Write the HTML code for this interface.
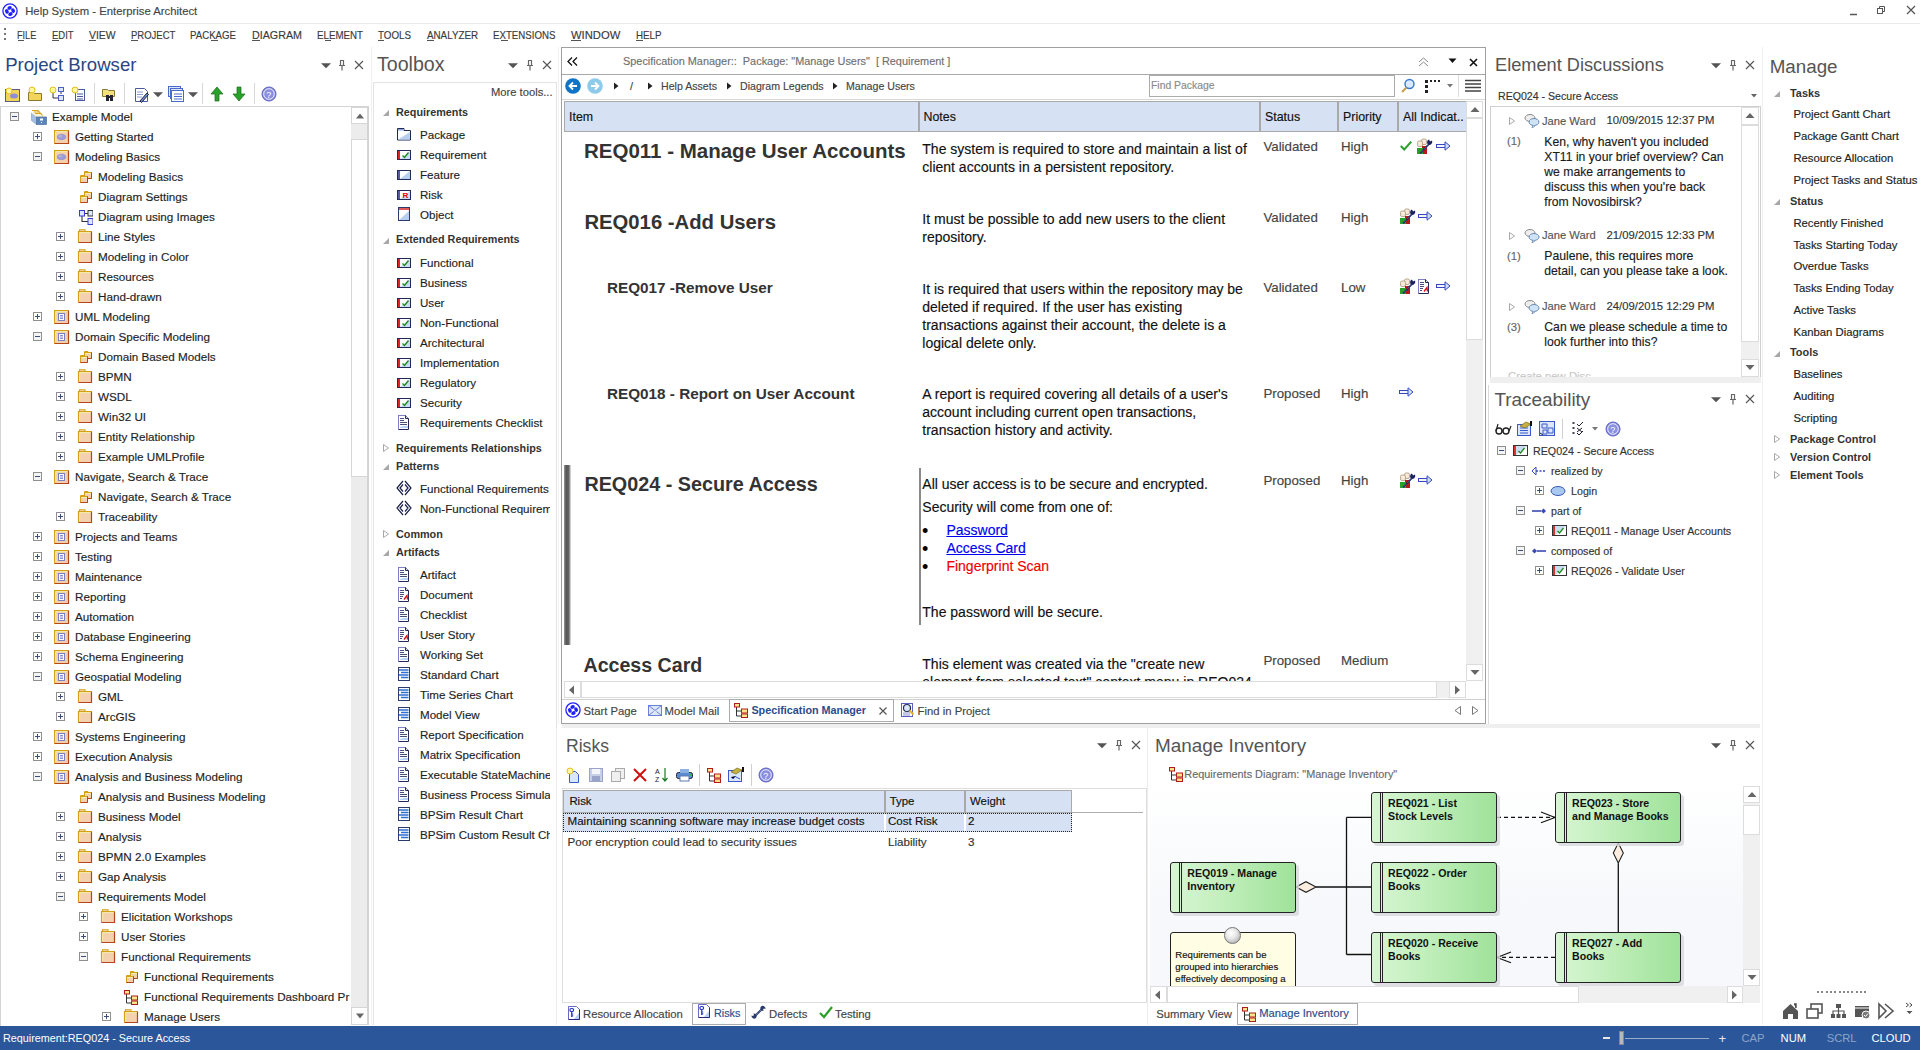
<!DOCTYPE html>
<html><head><meta charset="utf-8"><title>Help System - Enterprise Architect</title>
<style>
html,body{margin:0;padding:0;}
body{width:1920px;height:1050px;overflow:hidden;position:relative;background:#fff;font-family:"Liberation Sans", sans-serif;}
.t{position:absolute;white-space:pre;line-height:1;}
.r{position:absolute;box-sizing:border-box;}
.ic{position:absolute;overflow:visible;}
.clip{position:absolute;overflow:hidden;}
</style></head><body>
<svg width="0" height="0" style="position:absolute">
<defs>
<linearGradient id="gGreen" x1="0" x2="1" y1="0" y2="0"><stop offset="0" stop-color="#d4f4d0"/><stop offset="1" stop-color="#9de29a"/></linearGradient>
<linearGradient id="gBar" x1="0" x2="1"><stop offset="0" stop-color="#7a7a7a"/><stop offset="0.5" stop-color="#5a5a5a"/><stop offset="1" stop-color="#e8e8e8"/></linearGradient>
<radialGradient id="gBall" cx="0.4" cy="0.35" r="0.7"><stop offset="0" stop-color="#ffffff"/><stop offset="1" stop-color="#a8a8a8"/></radialGradient>
<symbol id="plus" viewBox="0 0 9 9"><rect x="0.5" y="0.5" width="8" height="8" fill="#fff" stroke="#8f8f8f"/><path d="M2 4.5h5M4.5 2v5" stroke="#3b4e7a" stroke-width="1"/></symbol>
<symbol id="minus" viewBox="0 0 9 9"><rect x="0.5" y="0.5" width="8" height="8" fill="#f4f4f4" stroke="#8f8f8f"/><path d="M2 4.5h5" stroke="#3b4e7a" stroke-width="1"/></symbol>
<symbol id="folder" viewBox="0 0 16 16"><path d="M2.5 2.2V0.8h5.5v1.4" fill="#f3e0c0" stroke="#d4a017" stroke-width="1.1"/><rect x="1.5" y="2.5" width="13" height="11" fill="#f3d0ae"/><path d="M1.5 13.5V2.5h13" fill="none" stroke="#d4a017" stroke-width="1.2"/><path d="M14.5 2.5v11h-13" fill="none" stroke="#b5451b" stroke-width="1.2"/><path d="M2.7 12.3V3.7h11" fill="none" stroke="#f5f0a8" stroke-width="0.9"/></symbol>
<symbol id="pkgview" viewBox="0 0 16 16"><rect x="0.5" y="1.5" width="14" height="13" fill="#f3d0ae"/><path d="M0.5 14.5V1.5h14" fill="none" stroke="#d4a017" stroke-width="1.2"/><path d="M14.5 1.5v13h-14" fill="none" stroke="#b5451b" stroke-width="1.2"/><path d="M1.7 13.3V2.7h11.6" fill="none" stroke="#f5f0a8" stroke-width="0.9"/><ellipse cx="7.5" cy="8" rx="4.2" ry="2.7" fill="#9c9cdc" stroke="#8080c0" stroke-width="0.5"/><ellipse cx="6.3" cy="7.2" rx="1.8" ry="1.1" fill="#b8b8c8"/></symbol>
<symbol id="pkglist" viewBox="0 0 16 16"><rect x="0.5" y="1.5" width="14" height="13" fill="#f3d0ae"/><path d="M0.5 14.5V1.5h14" fill="none" stroke="#d4a017" stroke-width="1.2"/><path d="M14.5 1.5v13h-14" fill="none" stroke="#b5451b" stroke-width="1.2"/><path d="M1.7 13.3V2.7h11.6" fill="none" stroke="#f5f0a8" stroke-width="0.9"/><rect x="4.5" y="4.5" width="6" height="7" fill="#fff" stroke="#6a78c0" stroke-width="0.9"/><path d="M6 6.5h3M6 8h3M6 9.5h3" stroke="#6a78c0" stroke-width="0.8"/></symbol>
<symbol id="diagram" viewBox="0 0 16 16"><path d="M7.5 3.5V2.5h3.5v1" fill="#f5f0c0" stroke="#d4a017"/><rect x="7.5" y="3.5" width="7" height="6" fill="#f3d0ae" stroke="#d4a017"/><path d="M14.5 3.5v6h-7" fill="none" stroke="#b5451b"/><path d="M8.5 4.5h5.5" stroke="#f5f0a8"/><path d="M3.5 7.5V6.5h3.5v1" fill="#f5f0c0" stroke="#d4a017"/><rect x="3.5" y="7.5" width="7" height="6" fill="#f3d0ae" stroke="#d4a017"/><path d="M10.5 7.5v6h-7" fill="none" stroke="#b5451b"/><path d="M4.5 8.5h5.5" stroke="#f5f0a8"/></symbol>
<symbol id="diagimg" viewBox="0 0 16 16"><path d="M7 4.5h4M5 7v5.5h6" stroke="#333" stroke-width="1.1" fill="none"/><rect x="2.5" y="1.5" width="5" height="5.5" fill="#dbe8fb" stroke="#3a3ad0"/><rect x="11" y="1.5" width="5" height="5.5" fill="#dbe8fb" stroke="#333"/><rect x="11" y="9.5" width="5" height="6" fill="#dbe8fb" stroke="#3a3ad0"/></symbol>
<symbol id="diagred" viewBox="0 0 16 16"><path d="M3.5 5v9h5M3.5 9h5" stroke="#333" fill="none"/><rect x="1.5" y="1.5" width="5" height="3.5" fill="#fde48a" stroke="#b01c1c"/><rect x="8.5" y="7" width="6" height="4" fill="#fde48a" stroke="#b01c1c"/><rect x="8.5" y="12" width="6" height="3.5" fill="#fde48a" stroke="#b01c1c"/></symbol>
<symbol id="model" viewBox="0 0 16 16"><path d="M0.5 4l5 4v7.5l-5-4z" fill="#a8c0e0" stroke="#7a98c4" stroke-width="0.6"/><path d="M0.5 4h9l6 4h-10z" fill="#fbf3d8"/><path d="M1 1.5h6l1.5 2M2.5 3h6l1.5 2M4 4.5h6l1.5 2" stroke="#d9a520" stroke-width="1.1" fill="none"/><rect x="5.5" y="8" width="10" height="7.5" fill="#5c85bb" stroke="#4a6fa2" stroke-width="0.7"/><rect x="9" y="9.5" width="3" height="2" fill="#fff"/><circle cx="10.5" cy="13.5" r="0.6" fill="#fff"/></symbol>
<symbol id="tbpkg" viewBox="0 0 16 16"><path d="M1.5 2.5h6.5v2h6.5v9.5h-13z" fill="#fff" stroke="#23285a"/><path d="M2 13.5L14 6v7.5z" fill="#b9cff0"/><rect x="2" y="3" width="5.5" height="1.5" fill="#8aa2d8"/></symbol>
<symbol id="tbreq" viewBox="0 0 16 16"><rect x="1.5" y="4.5" width="13" height="9" fill="#fff" stroke="#23285a"/><path d="M4 13V5h10z" fill="#fff"/><path d="M4 13L14 5v8z" fill="#cbdcf5"/><rect x="2" y="5" width="2" height="8" fill="#d22"/><path d="M6.5 9.5l2 2 4-5" stroke="#1a8a1a" stroke-width="1.3" fill="none"/></symbol>
<symbol id="tbfeat" viewBox="0 0 16 16"><rect x="1.5" y="4.5" width="13" height="9" fill="#fff" stroke="#23285a"/><path d="M4 13L14 5v8z" fill="#b9cff0"/><rect x="2" y="5" width="2" height="8" fill="#5a5aa0"/></symbol>
<symbol id="tbrisk" viewBox="0 0 16 16"><rect x="1.5" y="4.5" width="13" height="9" fill="#fff" stroke="#23285a"/><path d="M4 13L14 5v8z" fill="#cbdcf5"/><rect x="2" y="5" width="2" height="8" fill="#5a5aa0"/><text x="6.5" y="12.3" font-size="8" font-weight="bold" fill="#e00" font-family="Liberation Sans">R</text></symbol>
<symbol id="tbobj" viewBox="0 0 16 16"><rect x="2.5" y="1.5" width="11" height="13" fill="#fff" stroke="#2c3a6e"/><rect x="3" y="2" width="10" height="2" fill="#e05a5a"/><path d="M3 14L13 5v9z" fill="#b9cff0"/></symbol>
<symbol id="tbpat" viewBox="0 0 16 16"><path d="M7 1L1 8l6 7M7 4.5L4 8l3 3.5M9 1l6 7-6 7M9 4.5L12 8l-3 3.5" fill="none" stroke="#1a1f4a" stroke-width="1.2"/></symbol>
<symbol id="tbdoc" viewBox="0 0 16 16"><path d="M2.5 1.5h7l3 3v11h-10z" fill="#fff" stroke="#23285a"/><path d="M2.5 15.5v-14h7" fill="none" stroke="#8080c8"/><path d="M4 4.5h4M4 6.5h4M4 8.5h7M4 10.5h7" stroke="#4a4e7a"/><path d="M4 13l4-1h4v2H4z" fill="#b8d4f4"/><path d="M9.5 1.5v3h3" fill="#dde6f7" stroke="#23285a"/></symbol>
<symbol id="tbdocred" viewBox="0 0 16 16"><path d="M2.5 1.5h7l3 3v11h-10z" fill="#fff" stroke="#23285a"/><path d="M2.5 15.5v-14h7" fill="none" stroke="#8080c8"/><path d="M4 4.5h4M4 6.5h4M4 8.5h4M4 10.5h3M4 12.5h2" stroke="#4a4e7a"/><path d="M8 13.5l3-4 0.5 4" stroke="#e01010" stroke-width="1.3" fill="none"/><path d="M9.5 1.5v3h3" fill="#dde6f7" stroke="#23285a"/></symbol>
<symbol id="tbchart" viewBox="0 0 16 16"><rect x="2.5" y="1.5" width="11" height="13" fill="#fff" stroke="#2c3a6e"/><path d="M3 4h9.5M5 6.5h7.5M3 9h9.5M5 11.5h7.5" stroke="#2f6fd0" stroke-width="1.3"/></symbol>
<symbol id="pdown" viewBox="0 0 10 10"><path d="M0 3.2h10L5 8.2z" fill="#555"/></symbol>
<symbol id="pin" viewBox="0 0 10 12"><path d="M3 1.5h4M3.5 1.5v5M6.5 1.5v5M2 6.5h6M5 6.5v5" stroke="#666" fill="none" stroke-width="1.2"/></symbol>
<symbol id="xcl" viewBox="0 0 10 10"><path d="M1 1l8 8M9 1l-8 8" stroke="#555" stroke-width="1.1"/></symbol>
<symbol id="tri" viewBox="0 0 8 8"><path d="M7 1v6H1z" fill="#a8a8a8"/></symbol>
<symbol id="trir" viewBox="0 0 8 10"><path d="M1.5 1.5l5 3.5-5 3.5z" fill="none" stroke="#a8a8a8"/></symbol>
<symbol id="arrowr" viewBox="0 0 16 10"><rect x="1.5" y="3.5" width="9" height="3" fill="#f4f6ff" stroke="#3848c0"/><path d="M10 0.8L15 5l-5 4.2z" fill="#cfe0f8" stroke="#3848c0"/></symbol>
<symbol id="check" viewBox="0 0 16 16"><path d="M2 8l4 4 8-9" stroke="#2aa02a" stroke-width="2.2" fill="none"/></symbol>
<symbol id="people" viewBox="0 0 18 16"><rect x="6.5" y="1" width="5" height="5.5" rx="1.5" fill="#f8eadb" stroke="#a08c6a" stroke-width="0.7"/><rect x="2.5" y="3" width="5" height="5.5" rx="1.5" fill="#f8eadb" stroke="#a08c6a" stroke-width="0.7"/><rect x="7" y="8" width="5" height="8" fill="#b81818"/><rect x="2" y="10" width="6" height="6" fill="#28a028"/><path d="M5 15.5L15 5" stroke="#1a2060" stroke-width="1.8"/><path d="M5 15.5L15 5" stroke="#a8c8f0" stroke-width="0.6" stroke-dasharray="1 1"/><path d="M13 6.5a3 3 0 0 1 1-5l1 2 2-1a3 3 0 0 1-4 4z" fill="#1a2060"/></symbol>
<symbol id="help" viewBox="0 0 16 16"><circle cx="8" cy="8" r="7" fill="#8a8fe0" stroke="#5a5fc0"/><circle cx="8" cy="8" r="5.3" fill="none" stroke="#fff" stroke-width="0.8"/><text x="5.2" y="11.5" font-size="9" fill="#fff" font-family="Liberation Sans">?</text></symbol>
<symbol id="bubble" viewBox="0 0 16 16"><ellipse cx="6" cy="6" rx="5" ry="3.5" fill="#eee" stroke="#8a8a8a"/><ellipse cx="10" cy="10" rx="5" ry="3.5" fill="#cfe3f7" stroke="#6a8ab0"/><path d="M9 13l-1 3 3-2" fill="#cfe3f7" stroke="#6a8ab0" stroke-width="0.8"/></symbol>
<symbol id="eaLogo" viewBox="0 0 16 16"><circle cx="8" cy="8" r="7.1" fill="#fff" stroke="#2020ff" stroke-width="1.3"/><g fill="#2020ff"><ellipse cx="7.6" cy="4.9" rx="2.3" ry="1.8" transform="rotate(-25 7.6 4.9)"/><ellipse cx="11.1" cy="7.6" rx="2.3" ry="1.8" transform="rotate(65 11.1 7.6)"/><ellipse cx="8.4" cy="11.1" rx="2.3" ry="1.8" transform="rotate(-25 8.4 11.1)"/><ellipse cx="4.9" cy="8.4" rx="2.3" ry="1.8" transform="rotate(65 4.9 8.4)"/></g></symbol>
<symbol id="mail" viewBox="0 0 16 16"><rect x="1.5" y="3.5" width="13" height="10" fill="#dfe6fb" stroke="#6a7fd8"/><path d="M1.5 3.5l6.5 5 6.5-5M1.5 13.5l5-4M14.5 13.5l-5-4" stroke="#6a7fd8" fill="none"/></symbol>
<symbol id="findproj" viewBox="0 0 16 16"><rect x="1.5" y="1.5" width="11" height="13" fill="#fff" stroke="#5a5fc0"/><path d="M3 11h7M3 13h7" stroke="#8a8fd0"/><circle cx="7" cy="6" r="3.5" fill="#dbe8fa" stroke="#1a2a5a" stroke-width="1.2"/><path d="M9.5 8.5l4 4" stroke="#e8b020" stroke-width="2"/></symbol>
<symbol id="backc" viewBox="0 0 16 16"><circle cx="8" cy="8" r="7.8" fill="#0f74c8"/><path d="M12 8H5M8 4.5L4.5 8 8 11.5" stroke="#fff" stroke-width="1.8" fill="none"/></symbol>
<symbol id="fwdc" viewBox="0 0 16 16"><circle cx="8" cy="8" r="7.8" fill="#8ecbea"/><path d="M4 8h7M8 4.5L11.5 8 8 11.5" stroke="#fff" stroke-width="1.8" fill="none"/></symbol>
<symbol id="navtri" viewBox="0 0 8 10"><path d="M2 1.5L6.5 5 2 8.5z" fill="#222"/></symbol>
<symbol id="mag" viewBox="0 0 16 16"><circle cx="9.5" cy="6" r="4.5" fill="#dbeafc" stroke="#3a78c8" stroke-width="1.4"/><path d="M6.5 9.5L2 14" stroke="#c8a050" stroke-width="2.2"/></symbol>
<symbol id="reqsmall" viewBox="0 0 16 14"><rect x="0.5" y="1.5" width="14" height="10" fill="#fff" stroke="#333"/><path d="M3 11V2h11z" fill="#cbdcf5"/><rect x="1" y="2" width="2" height="9" fill="#d33"/><path d="M5.5 7l2 2 4-5" stroke="#1a8a1a" stroke-width="1.3" fill="none"/></symbol>
</defs></svg>
<svg class="ic" style="left:2px;top:3px;" width="16" height="16" viewBox="0 0 16 16"><use href="#eaLogo"/></svg><div class="t " style="left:25.20px;top:5.63px;font-size:11.3px;-webkit-text-stroke-width:0.15px;color:#444;">Help System - Enterprise Architect</div><svg class="ic" style="left:1849px;top:6px;" width="10" height="10" viewBox="0 0 10 10"><path d="M1 8.5h7" stroke="#555" stroke-width="1.5"/></svg><svg class="ic" style="left:1876px;top:5px;" width="10" height="10" viewBox="0 0 10 10"><rect x="1.5" y="3.5" width="5" height="5" fill="none" stroke="#555"/><path d="M3.5 3.5v-2h5v5h-2" fill="none" stroke="#555"/></svg><svg class="ic" style="left:1906px;top:5px;" width="10" height="10" viewBox="0 0 10 10"><path d="M1 1l8 8M9 1l-8 8" stroke="#555" stroke-width="1.2"/></svg><div class="r" style="left:0px;top:23px;width:1920px;height:1px;background:#eaeaea"></div><svg class="ic" style="left:4px;top:28px;" width="3" height="14" viewBox="0 0 3 14"><rect x="0" y="0" width="2" height="2" fill="#777"/><rect x="0" y="5" width="2" height="2" fill="#777"/><rect x="0" y="10" width="2" height="2" fill="#777"/></svg><div class="t " style="left:17.40px;top:29.67px;font-size:10.9px;-webkit-text-stroke-width:0.15px;color:#3a3a3a;transform:scaleX(0.839);transform-origin:0 0;">FILE</div><div class="t " style="left:52.20px;top:29.67px;font-size:10.9px;-webkit-text-stroke-width:0.15px;color:#3a3a3a;transform:scaleX(0.871);transform-origin:0 0;">EDIT</div><div class="t " style="left:89.00px;top:29.67px;font-size:10.9px;-webkit-text-stroke-width:0.15px;color:#3a3a3a;transform:scaleX(0.955);transform-origin:0 0;">VIEW</div><div class="t " style="left:131.00px;top:29.67px;font-size:10.9px;-webkit-text-stroke-width:0.15px;color:#3a3a3a;transform:scaleX(0.872);transform-origin:0 0;">PROJECT</div><div class="t " style="left:190.40px;top:29.67px;font-size:10.9px;-webkit-text-stroke-width:0.15px;color:#3a3a3a;transform:scaleX(0.887);transform-origin:0 0;">PACKAGE</div><div class="t " style="left:252.00px;top:29.67px;font-size:10.9px;-webkit-text-stroke-width:0.15px;color:#3a3a3a;transform:scaleX(0.984);transform-origin:0 0;">DIAGRAM</div><div class="t " style="left:317.00px;top:29.67px;font-size:10.9px;-webkit-text-stroke-width:0.15px;color:#3a3a3a;transform:scaleX(0.894);transform-origin:0 0;">ELEMENT</div><div class="t " style="left:378.00px;top:29.67px;font-size:10.9px;-webkit-text-stroke-width:0.15px;color:#3a3a3a;transform:scaleX(0.899);transform-origin:0 0;">TOOLS</div><div class="t " style="left:427.00px;top:29.67px;font-size:10.9px;-webkit-text-stroke-width:0.15px;color:#3a3a3a;transform:scaleX(0.9);transform-origin:0 0;">ANALYZER</div><div class="t " style="left:493.00px;top:29.67px;font-size:10.9px;-webkit-text-stroke-width:0.15px;color:#3a3a3a;transform:scaleX(0.89);transform-origin:0 0;">EXTENSIONS</div><div class="t " style="left:571.00px;top:29.67px;font-size:10.9px;-webkit-text-stroke-width:0.15px;color:#3a3a3a;transform:scaleX(1.03);transform-origin:0 0;">WINDOW</div><div class="t " style="left:636.00px;top:29.67px;font-size:10.9px;-webkit-text-stroke-width:0.15px;color:#3a3a3a;transform:scaleX(0.896);transform-origin:0 0;">HELP</div><div class="r" style="left:17.5px;top:40px;width:6px;height:1px;background:#555"></div><div class="r" style="left:52.3px;top:40px;width:7px;height:1px;background:#555"></div><div class="r" style="left:89px;top:40px;width:7px;height:1px;background:#555"></div><div class="r" style="left:131px;top:40px;width:7px;height:1px;background:#555"></div><div class="r" style="left:210.5px;top:40px;width:7px;height:1px;background:#555"></div><div class="r" style="left:252px;top:40px;width:8px;height:1px;background:#555"></div><div class="r" style="left:325px;top:40px;width:6px;height:1px;background:#555"></div><div class="r" style="left:378px;top:40px;width:6px;height:1px;background:#555"></div><div class="r" style="left:427px;top:40px;width:7px;height:1px;background:#555"></div><div class="r" style="left:501px;top:40px;width:7px;height:1px;background:#555"></div><div class="r" style="left:571px;top:40px;width:10px;height:1px;background:#555"></div><div class="r" style="left:636px;top:40px;width:7px;height:1px;background:#555"></div><div class="t " style="left:5.20px;top:56.06px;font-size:18.6px;color:#2a4582;">Project Browser</div><svg class="ic" style="left:321px;top:60px;" width="10" height="10" viewBox="0 0 10 10"><use href="#pdown"/></svg><svg class="ic" style="left:337px;top:59px;" width="10" height="12" viewBox="0 0 10 12"><use href="#pin"/></svg><svg class="ic" style="left:354px;top:60px;" width="10" height="10" viewBox="0 0 10 10"><use href="#xcl"/></svg><svg class="ic" style="left:5px;top:87px;" width="16" height="16" viewBox="0 0 16 16"><rect x="0.5" y="2.5" width="14" height="12" fill="#f2d45a" stroke="#5a5a8a"/><ellipse cx="9" cy="9" rx="4" ry="2.5" fill="#8f8fd0"/><circle cx="4" cy="4" r="3" fill="#fff8a0" stroke="#e0c020"/></svg><svg class="ic" style="left:27px;top:86px;" width="16" height="16" viewBox="0 0 16 16"><path d="M1.5 6.5h5l1 1h7v7h-13z" fill="#f2d45a" stroke="#8a7a30"/><circle cx="5" cy="4" r="3" fill="#fff8a0" stroke="#e0c020"/></svg><svg class="ic" style="left:49px;top:86px;" width="16" height="16" viewBox="0 0 16 16"><path d="M4 6v6h6M12 5v3" stroke="#333" fill="none"/><rect x="9.5" y="1.5" width="5" height="4" fill="#dde8fa" stroke="#4a5fc1"/><rect x="9.5" y="9.5" width="5" height="5" fill="#dde8fa" stroke="#4a5fc1"/><circle cx="4" cy="4" r="3" fill="#fff8a0" stroke="#e0c020"/></svg><svg class="ic" style="left:71px;top:86px;" width="16" height="16" viewBox="0 0 16 16"><rect x="4.5" y="3.5" width="9" height="11" fill="#fff" stroke="#4a5a9e"/><path d="M6 8h6M6 10.5h6M6 13h6" stroke="#4a5a9e"/><circle cx="4" cy="4" r="3" fill="#fff8a0" stroke="#e0c020"/></svg><div class="r" style="left:94px;top:83px;width:1px;height:21px;background:#d8d8d8"></div><svg class="ic" style="left:101px;top:87px;" width="16" height="16" viewBox="0 0 16 16"><path d="M1.5 2.5h5l1 1h6v6h-12z" fill="#f2e07a" stroke="#8a7a30"/><path d="M5 8h3v6H5zM9 8h3v6H9z" fill="#223"/><rect x="7" y="9" width="3" height="2" fill="#223"/></svg><div class="r" style="left:124px;top:83px;width:1px;height:21px;background:#d8d8d8"></div><svg class="ic" style="left:134px;top:87px;" width="16" height="16" viewBox="0 0 16 16"><path d="M1.5 1.5h9l3 3v10h-12z" fill="#fff" stroke="#4a5a9e"/><path d="M3 5h6M3 7.5h6M3 10h5" stroke="#8a9ad0"/><path d="M6 14l7-8 1.5 1.5-7 8z" fill="#6a8ae0" stroke="#223"/></svg><svg class="ic" style="left:153px;top:89px;" width="10" height="10" viewBox="0 0 10 10"><use href="#pdown"/></svg><svg class="ic" style="left:168px;top:86px;" width="16" height="16" viewBox="0 0 16 16"><rect x="0.5" y="0.5" width="12" height="10" fill="#dbe6fb" stroke="#4a6ac8"/><rect x="2.5" y="2.5" width="12" height="10" fill="#dbe6fb" stroke="#4a6ac8"/><rect x="3.5" y="4.5" width="12" height="11" fill="#fff" stroke="#4a6ac8"/><path d="M6 8h8M6 10.5h8M6 13h8" stroke="#4a6ac8"/></svg><svg class="ic" style="left:188px;top:89px;" width="10" height="10" viewBox="0 0 10 10"><use href="#pdown"/></svg><div class="r" style="left:202px;top:83px;width:1px;height:21px;background:#d8d8d8"></div><svg class="ic" style="left:209px;top:86px;" width="16" height="16" viewBox="0 0 16 16"><path d="M8 1L2 8h4v7h4V8h4z" fill="#2aa12a" stroke="#1a6a1a" stroke-width="0.7"/></svg><svg class="ic" style="left:231px;top:86px;" width="16" height="16" viewBox="0 0 16 16"><path d="M8 15L2 8h4V1h4v7h4z" fill="#2aa12a" stroke="#1a6a1a" stroke-width="0.7"/></svg><div class="r" style="left:254px;top:83px;width:1px;height:21px;background:#d8d8d8"></div><svg class="ic" style="left:260.5px;top:86px;" width="16" height="16" viewBox="0 0 16 16"><use href="#help"/></svg><div class="r" style="left:0px;top:106px;width:369px;height:920px;border:1px solid #d4d4d4;border-right:none;border-bottom:none;"></div><div class="clip" style="left:1px;top:107px;width:350px;height:918px;"><svg class="ic" style="left:9px;top:5px;" width="9" height="9" viewBox="0 0 9 9"><use href="#minus"/></svg><svg class="ic" style="left:30px;top:2px;" width="16" height="16" viewBox="0 0 16 16"><use href="#model"/></svg><div class="t " style="left:51.00px;top:4.10px;font-size:11.7px;-webkit-text-stroke-width:0.15px;color:#1e1e1e;">Example Model</div><svg class="ic" style="left:32px;top:25px;" width="9" height="9" viewBox="0 0 9 9"><use href="#plus"/></svg><svg class="ic" style="left:53px;top:22px;" width="16" height="16" viewBox="0 0 16 16"><use href="#pkgview"/></svg><div class="t " style="left:74.00px;top:24.10px;font-size:11.7px;-webkit-text-stroke-width:0.15px;color:#1e1e1e;">Getting Started</div><svg class="ic" style="left:32px;top:45px;" width="9" height="9" viewBox="0 0 9 9"><use href="#minus"/></svg><svg class="ic" style="left:53px;top:42px;" width="16" height="16" viewBox="0 0 16 16"><use href="#pkgview"/></svg><div class="t " style="left:74.00px;top:44.10px;font-size:11.7px;-webkit-text-stroke-width:0.15px;color:#1e1e1e;">Modeling Basics</div><svg class="ic" style="left:76px;top:62px;" width="16" height="16" viewBox="0 0 16 16"><use href="#diagram"/></svg><div class="t " style="left:97.00px;top:64.10px;font-size:11.7px;-webkit-text-stroke-width:0.15px;color:#1e1e1e;">Modeling Basics</div><svg class="ic" style="left:76px;top:82px;" width="16" height="16" viewBox="0 0 16 16"><use href="#diagram"/></svg><div class="t " style="left:97.00px;top:84.10px;font-size:11.7px;-webkit-text-stroke-width:0.15px;color:#1e1e1e;">Diagram Settings</div><svg class="ic" style="left:76px;top:102px;" width="16" height="16" viewBox="0 0 16 16"><use href="#diagimg"/></svg><div class="t " style="left:97.00px;top:104.10px;font-size:11.7px;-webkit-text-stroke-width:0.15px;color:#1e1e1e;">Diagram using Images</div><svg class="ic" style="left:55px;top:125px;" width="9" height="9" viewBox="0 0 9 9"><use href="#plus"/></svg><svg class="ic" style="left:76px;top:122px;" width="16" height="16" viewBox="0 0 16 16"><use href="#folder"/></svg><div class="t " style="left:97.00px;top:124.10px;font-size:11.7px;-webkit-text-stroke-width:0.15px;color:#1e1e1e;">Line Styles</div><svg class="ic" style="left:55px;top:145px;" width="9" height="9" viewBox="0 0 9 9"><use href="#plus"/></svg><svg class="ic" style="left:76px;top:142px;" width="16" height="16" viewBox="0 0 16 16"><use href="#folder"/></svg><div class="t " style="left:97.00px;top:144.10px;font-size:11.7px;-webkit-text-stroke-width:0.15px;color:#1e1e1e;">Modeling in Color</div><svg class="ic" style="left:55px;top:165px;" width="9" height="9" viewBox="0 0 9 9"><use href="#plus"/></svg><svg class="ic" style="left:76px;top:162px;" width="16" height="16" viewBox="0 0 16 16"><use href="#folder"/></svg><div class="t " style="left:97.00px;top:164.10px;font-size:11.7px;-webkit-text-stroke-width:0.15px;color:#1e1e1e;">Resources</div><svg class="ic" style="left:55px;top:185px;" width="9" height="9" viewBox="0 0 9 9"><use href="#plus"/></svg><svg class="ic" style="left:76px;top:182px;" width="16" height="16" viewBox="0 0 16 16"><use href="#folder"/></svg><div class="t " style="left:97.00px;top:184.10px;font-size:11.7px;-webkit-text-stroke-width:0.15px;color:#1e1e1e;">Hand-drawn</div><svg class="ic" style="left:32px;top:205px;" width="9" height="9" viewBox="0 0 9 9"><use href="#plus"/></svg><svg class="ic" style="left:53px;top:202px;" width="16" height="16" viewBox="0 0 16 16"><use href="#pkglist"/></svg><div class="t " style="left:74.00px;top:204.10px;font-size:11.7px;-webkit-text-stroke-width:0.15px;color:#1e1e1e;">UML Modeling</div><svg class="ic" style="left:32px;top:225px;" width="9" height="9" viewBox="0 0 9 9"><use href="#minus"/></svg><svg class="ic" style="left:53px;top:222px;" width="16" height="16" viewBox="0 0 16 16"><use href="#pkglist"/></svg><div class="t " style="left:74.00px;top:224.10px;font-size:11.7px;-webkit-text-stroke-width:0.15px;color:#1e1e1e;">Domain Specific Modeling</div><svg class="ic" style="left:76px;top:242px;" width="16" height="16" viewBox="0 0 16 16"><use href="#diagram"/></svg><div class="t " style="left:97.00px;top:244.10px;font-size:11.7px;-webkit-text-stroke-width:0.15px;color:#1e1e1e;">Domain Based Models</div><svg class="ic" style="left:55px;top:265px;" width="9" height="9" viewBox="0 0 9 9"><use href="#plus"/></svg><svg class="ic" style="left:76px;top:262px;" width="16" height="16" viewBox="0 0 16 16"><use href="#folder"/></svg><div class="t " style="left:97.00px;top:264.10px;font-size:11.7px;-webkit-text-stroke-width:0.15px;color:#1e1e1e;">BPMN</div><svg class="ic" style="left:55px;top:285px;" width="9" height="9" viewBox="0 0 9 9"><use href="#plus"/></svg><svg class="ic" style="left:76px;top:282px;" width="16" height="16" viewBox="0 0 16 16"><use href="#folder"/></svg><div class="t " style="left:97.00px;top:284.10px;font-size:11.7px;-webkit-text-stroke-width:0.15px;color:#1e1e1e;">WSDL</div><svg class="ic" style="left:55px;top:305px;" width="9" height="9" viewBox="0 0 9 9"><use href="#plus"/></svg><svg class="ic" style="left:76px;top:302px;" width="16" height="16" viewBox="0 0 16 16"><use href="#folder"/></svg><div class="t " style="left:97.00px;top:304.10px;font-size:11.7px;-webkit-text-stroke-width:0.15px;color:#1e1e1e;">Win32 UI</div><svg class="ic" style="left:55px;top:325px;" width="9" height="9" viewBox="0 0 9 9"><use href="#plus"/></svg><svg class="ic" style="left:76px;top:322px;" width="16" height="16" viewBox="0 0 16 16"><use href="#folder"/></svg><div class="t " style="left:97.00px;top:324.10px;font-size:11.7px;-webkit-text-stroke-width:0.15px;color:#1e1e1e;">Entity Relationship</div><svg class="ic" style="left:55px;top:345px;" width="9" height="9" viewBox="0 0 9 9"><use href="#plus"/></svg><svg class="ic" style="left:76px;top:342px;" width="16" height="16" viewBox="0 0 16 16"><use href="#folder"/></svg><div class="t " style="left:97.00px;top:344.10px;font-size:11.7px;-webkit-text-stroke-width:0.15px;color:#1e1e1e;">Example UMLProfile</div><svg class="ic" style="left:32px;top:365px;" width="9" height="9" viewBox="0 0 9 9"><use href="#minus"/></svg><svg class="ic" style="left:53px;top:362px;" width="16" height="16" viewBox="0 0 16 16"><use href="#pkglist"/></svg><div class="t " style="left:74.00px;top:364.10px;font-size:11.7px;-webkit-text-stroke-width:0.15px;color:#1e1e1e;">Navigate, Search &amp; Trace</div><svg class="ic" style="left:76px;top:382px;" width="16" height="16" viewBox="0 0 16 16"><use href="#diagram"/></svg><div class="t " style="left:97.00px;top:384.10px;font-size:11.7px;-webkit-text-stroke-width:0.15px;color:#1e1e1e;">Navigate, Search &amp; Trace</div><svg class="ic" style="left:55px;top:405px;" width="9" height="9" viewBox="0 0 9 9"><use href="#plus"/></svg><svg class="ic" style="left:76px;top:402px;" width="16" height="16" viewBox="0 0 16 16"><use href="#folder"/></svg><div class="t " style="left:97.00px;top:404.10px;font-size:11.7px;-webkit-text-stroke-width:0.15px;color:#1e1e1e;">Traceability</div><svg class="ic" style="left:32px;top:425px;" width="9" height="9" viewBox="0 0 9 9"><use href="#plus"/></svg><svg class="ic" style="left:53px;top:422px;" width="16" height="16" viewBox="0 0 16 16"><use href="#pkglist"/></svg><div class="t " style="left:74.00px;top:424.10px;font-size:11.7px;-webkit-text-stroke-width:0.15px;color:#1e1e1e;">Projects and Teams</div><svg class="ic" style="left:32px;top:445px;" width="9" height="9" viewBox="0 0 9 9"><use href="#plus"/></svg><svg class="ic" style="left:53px;top:442px;" width="16" height="16" viewBox="0 0 16 16"><use href="#pkglist"/></svg><div class="t " style="left:74.00px;top:444.10px;font-size:11.7px;-webkit-text-stroke-width:0.15px;color:#1e1e1e;">Testing</div><svg class="ic" style="left:32px;top:465px;" width="9" height="9" viewBox="0 0 9 9"><use href="#plus"/></svg><svg class="ic" style="left:53px;top:462px;" width="16" height="16" viewBox="0 0 16 16"><use href="#pkglist"/></svg><div class="t " style="left:74.00px;top:464.10px;font-size:11.7px;-webkit-text-stroke-width:0.15px;color:#1e1e1e;">Maintenance</div><svg class="ic" style="left:32px;top:485px;" width="9" height="9" viewBox="0 0 9 9"><use href="#plus"/></svg><svg class="ic" style="left:53px;top:482px;" width="16" height="16" viewBox="0 0 16 16"><use href="#pkglist"/></svg><div class="t " style="left:74.00px;top:484.10px;font-size:11.7px;-webkit-text-stroke-width:0.15px;color:#1e1e1e;">Reporting</div><svg class="ic" style="left:32px;top:505px;" width="9" height="9" viewBox="0 0 9 9"><use href="#plus"/></svg><svg class="ic" style="left:53px;top:502px;" width="16" height="16" viewBox="0 0 16 16"><use href="#pkglist"/></svg><div class="t " style="left:74.00px;top:504.10px;font-size:11.7px;-webkit-text-stroke-width:0.15px;color:#1e1e1e;">Automation</div><svg class="ic" style="left:32px;top:525px;" width="9" height="9" viewBox="0 0 9 9"><use href="#plus"/></svg><svg class="ic" style="left:53px;top:522px;" width="16" height="16" viewBox="0 0 16 16"><use href="#pkglist"/></svg><div class="t " style="left:74.00px;top:524.10px;font-size:11.7px;-webkit-text-stroke-width:0.15px;color:#1e1e1e;">Database Engineering</div><svg class="ic" style="left:32px;top:545px;" width="9" height="9" viewBox="0 0 9 9"><use href="#plus"/></svg><svg class="ic" style="left:53px;top:542px;" width="16" height="16" viewBox="0 0 16 16"><use href="#pkglist"/></svg><div class="t " style="left:74.00px;top:544.10px;font-size:11.7px;-webkit-text-stroke-width:0.15px;color:#1e1e1e;">Schema Engineering</div><svg class="ic" style="left:32px;top:565px;" width="9" height="9" viewBox="0 0 9 9"><use href="#minus"/></svg><svg class="ic" style="left:53px;top:562px;" width="16" height="16" viewBox="0 0 16 16"><use href="#pkglist"/></svg><div class="t " style="left:74.00px;top:564.10px;font-size:11.7px;-webkit-text-stroke-width:0.15px;color:#1e1e1e;">Geospatial Modeling</div><svg class="ic" style="left:55px;top:585px;" width="9" height="9" viewBox="0 0 9 9"><use href="#plus"/></svg><svg class="ic" style="left:76px;top:582px;" width="16" height="16" viewBox="0 0 16 16"><use href="#folder"/></svg><div class="t " style="left:97.00px;top:584.10px;font-size:11.7px;-webkit-text-stroke-width:0.15px;color:#1e1e1e;">GML</div><svg class="ic" style="left:55px;top:605px;" width="9" height="9" viewBox="0 0 9 9"><use href="#plus"/></svg><svg class="ic" style="left:76px;top:602px;" width="16" height="16" viewBox="0 0 16 16"><use href="#folder"/></svg><div class="t " style="left:97.00px;top:604.10px;font-size:11.7px;-webkit-text-stroke-width:0.15px;color:#1e1e1e;">ArcGIS</div><svg class="ic" style="left:32px;top:625px;" width="9" height="9" viewBox="0 0 9 9"><use href="#plus"/></svg><svg class="ic" style="left:53px;top:622px;" width="16" height="16" viewBox="0 0 16 16"><use href="#pkglist"/></svg><div class="t " style="left:74.00px;top:624.10px;font-size:11.7px;-webkit-text-stroke-width:0.15px;color:#1e1e1e;">Systems Engineering</div><svg class="ic" style="left:32px;top:645px;" width="9" height="9" viewBox="0 0 9 9"><use href="#plus"/></svg><svg class="ic" style="left:53px;top:642px;" width="16" height="16" viewBox="0 0 16 16"><use href="#pkglist"/></svg><div class="t " style="left:74.00px;top:644.10px;font-size:11.7px;-webkit-text-stroke-width:0.15px;color:#1e1e1e;">Execution Analysis</div><svg class="ic" style="left:32px;top:665px;" width="9" height="9" viewBox="0 0 9 9"><use href="#minus"/></svg><svg class="ic" style="left:53px;top:662px;" width="16" height="16" viewBox="0 0 16 16"><use href="#pkglist"/></svg><div class="t " style="left:74.00px;top:664.10px;font-size:11.7px;-webkit-text-stroke-width:0.15px;color:#1e1e1e;">Analysis and Business Modeling</div><svg class="ic" style="left:76px;top:682px;" width="16" height="16" viewBox="0 0 16 16"><use href="#diagram"/></svg><div class="t " style="left:97.00px;top:684.10px;font-size:11.7px;-webkit-text-stroke-width:0.15px;color:#1e1e1e;">Analysis and Business Modeling</div><svg class="ic" style="left:55px;top:705px;" width="9" height="9" viewBox="0 0 9 9"><use href="#plus"/></svg><svg class="ic" style="left:76px;top:702px;" width="16" height="16" viewBox="0 0 16 16"><use href="#folder"/></svg><div class="t " style="left:97.00px;top:704.10px;font-size:11.7px;-webkit-text-stroke-width:0.15px;color:#1e1e1e;">Business Model</div><svg class="ic" style="left:55px;top:725px;" width="9" height="9" viewBox="0 0 9 9"><use href="#plus"/></svg><svg class="ic" style="left:76px;top:722px;" width="16" height="16" viewBox="0 0 16 16"><use href="#folder"/></svg><div class="t " style="left:97.00px;top:724.10px;font-size:11.7px;-webkit-text-stroke-width:0.15px;color:#1e1e1e;">Analysis</div><svg class="ic" style="left:55px;top:745px;" width="9" height="9" viewBox="0 0 9 9"><use href="#plus"/></svg><svg class="ic" style="left:76px;top:742px;" width="16" height="16" viewBox="0 0 16 16"><use href="#folder"/></svg><div class="t " style="left:97.00px;top:744.10px;font-size:11.7px;-webkit-text-stroke-width:0.15px;color:#1e1e1e;">BPMN 2.0 Examples</div><svg class="ic" style="left:55px;top:765px;" width="9" height="9" viewBox="0 0 9 9"><use href="#plus"/></svg><svg class="ic" style="left:76px;top:762px;" width="16" height="16" viewBox="0 0 16 16"><use href="#folder"/></svg><div class="t " style="left:97.00px;top:764.10px;font-size:11.7px;-webkit-text-stroke-width:0.15px;color:#1e1e1e;">Gap Analysis</div><svg class="ic" style="left:55px;top:785px;" width="9" height="9" viewBox="0 0 9 9"><use href="#minus"/></svg><svg class="ic" style="left:76px;top:782px;" width="16" height="16" viewBox="0 0 16 16"><use href="#folder"/></svg><div class="t " style="left:97.00px;top:784.10px;font-size:11.7px;-webkit-text-stroke-width:0.15px;color:#1e1e1e;">Requirements Model</div><svg class="ic" style="left:78px;top:805px;" width="9" height="9" viewBox="0 0 9 9"><use href="#plus"/></svg><svg class="ic" style="left:99px;top:802px;" width="16" height="16" viewBox="0 0 16 16"><use href="#folder"/></svg><div class="t " style="left:120.00px;top:804.10px;font-size:11.7px;-webkit-text-stroke-width:0.15px;color:#1e1e1e;">Elicitation Workshops</div><svg class="ic" style="left:78px;top:825px;" width="9" height="9" viewBox="0 0 9 9"><use href="#plus"/></svg><svg class="ic" style="left:99px;top:822px;" width="16" height="16" viewBox="0 0 16 16"><use href="#folder"/></svg><div class="t " style="left:120.00px;top:824.10px;font-size:11.7px;-webkit-text-stroke-width:0.15px;color:#1e1e1e;">User Stories</div><svg class="ic" style="left:78px;top:845px;" width="9" height="9" viewBox="0 0 9 9"><use href="#minus"/></svg><svg class="ic" style="left:99px;top:842px;" width="16" height="16" viewBox="0 0 16 16"><use href="#folder"/></svg><div class="t " style="left:120.00px;top:844.10px;font-size:11.7px;-webkit-text-stroke-width:0.15px;color:#1e1e1e;">Functional Requirements</div><svg class="ic" style="left:122px;top:862px;" width="16" height="16" viewBox="0 0 16 16"><use href="#diagram"/></svg><div class="t " style="left:143.00px;top:864.10px;font-size:11.7px;-webkit-text-stroke-width:0.15px;color:#1e1e1e;">Functional Requirements</div><svg class="ic" style="left:122px;top:882px;" width="16" height="16" viewBox="0 0 16 16"><use href="#diagred"/></svg><div class="t " style="left:143.00px;top:884.10px;font-size:11.7px;-webkit-text-stroke-width:0.15px;color:#1e1e1e;">Functional Requirements Dashboard Pr</div><svg class="ic" style="left:101px;top:905px;" width="9" height="9" viewBox="0 0 9 9"><use href="#plus"/></svg><svg class="ic" style="left:122px;top:902px;" width="16" height="16" viewBox="0 0 16 16"><use href="#folder"/></svg><div class="t " style="left:143.00px;top:904.10px;font-size:11.7px;-webkit-text-stroke-width:0.15px;color:#1e1e1e;">Manage Users</div></div><div class="r" style="left:351px;top:107px;width:18px;height:918px;background:#ececec;border-right:2px solid #d2d2d2;"></div><div class="r" style="left:351px;top:107px;width:17px;height:17px;background:#fff;border:1px solid #d6d6d6;"></div><svg class="ic" style="left:355px;top:112px;" width="10" height="8" viewBox="0 0 10 8"><path d="M1 6.5h8L5 1.5z" fill="#666"/></svg><div class="r" style="left:351px;top:139px;width:17px;height:338px;background:#fff;border:1px solid #d6d6d6;"></div><div class="r" style="left:351px;top:1007px;width:17px;height:18px;background:#fff;border:1px solid #d6d6d6;"></div><svg class="ic" style="left:355px;top:1012px;" width="10" height="8" viewBox="0 0 10 8"><path d="M1 1.5h8L5 6.5z" fill="#666"/></svg><div class="r" style="left:371px;top:47px;width:1px;height:978px;background:#f0f0f0"></div><div class="t " style="left:377.00px;top:55.21px;font-size:19.6px;color:#555;">Toolbox</div><svg class="ic" style="left:508px;top:60px;" width="10" height="10" viewBox="0 0 10 10"><use href="#pdown"/></svg><svg class="ic" style="left:525px;top:59px;" width="10" height="12" viewBox="0 0 10 12"><use href="#pin"/></svg><svg class="ic" style="left:542px;top:60px;" width="10" height="10" viewBox="0 0 10 10"><use href="#xcl"/></svg><div class="r" style="left:373px;top:82px;width:184px;height:943px;border:1px solid #e3e3e3;border-bottom:none;"></div><div class="t " style="left:491.00px;top:87.12px;font-size:11.2px;-webkit-text-stroke-width:0.15px;color:#444;">More tools...</div><div class="clip" style="left:374px;top:100px;width:176px;height:760px;"><svg class="ic" style="left:8px;top:9px;" width="8" height="8" viewBox="0 0 8 8"><use href="#tri"/></svg><div class="t " style="left:22.00px;top:6.86px;font-size:10.8px;color:#333;font-weight:bold;">Requirements</div><svg class="ic" style="left:22px;top:26px;" width="16" height="16" viewBox="0 0 16 16"><use href="#tbpkg"/></svg><div class="t " style="left:46.00px;top:29.18px;font-size:11.6px;-webkit-text-stroke-width:0.15px;color:#1e1e1e;">Package</div><svg class="ic" style="left:22px;top:46px;" width="16" height="16" viewBox="0 0 16 16"><use href="#tbreq"/></svg><div class="t " style="left:46.00px;top:49.18px;font-size:11.6px;-webkit-text-stroke-width:0.15px;color:#1e1e1e;">Requirement</div><svg class="ic" style="left:22px;top:66px;" width="16" height="16" viewBox="0 0 16 16"><use href="#tbfeat"/></svg><div class="t " style="left:46.00px;top:69.18px;font-size:11.6px;-webkit-text-stroke-width:0.15px;color:#1e1e1e;">Feature</div><svg class="ic" style="left:22px;top:86px;" width="16" height="16" viewBox="0 0 16 16"><use href="#tbrisk"/></svg><div class="t " style="left:46.00px;top:89.18px;font-size:11.6px;-webkit-text-stroke-width:0.15px;color:#1e1e1e;">Risk</div><svg class="ic" style="left:22px;top:106px;" width="16" height="16" viewBox="0 0 16 16"><use href="#tbobj"/></svg><div class="t " style="left:46.00px;top:109.18px;font-size:11.6px;-webkit-text-stroke-width:0.15px;color:#1e1e1e;">Object</div><svg class="ic" style="left:8px;top:137px;" width="8" height="8" viewBox="0 0 8 8"><use href="#tri"/></svg><div class="t " style="left:22.00px;top:134.46px;font-size:10.8px;color:#333;font-weight:bold;">Extended Requirements</div><svg class="ic" style="left:22px;top:154px;" width="16" height="16" viewBox="0 0 16 16"><use href="#tbreq"/></svg><div class="t " style="left:46.00px;top:157.18px;font-size:11.6px;-webkit-text-stroke-width:0.15px;color:#1e1e1e;">Functional</div><svg class="ic" style="left:22px;top:174px;" width="16" height="16" viewBox="0 0 16 16"><use href="#tbreq"/></svg><div class="t " style="left:46.00px;top:177.18px;font-size:11.6px;-webkit-text-stroke-width:0.15px;color:#1e1e1e;">Business</div><svg class="ic" style="left:22px;top:194px;" width="16" height="16" viewBox="0 0 16 16"><use href="#tbreq"/></svg><div class="t " style="left:46.00px;top:197.18px;font-size:11.6px;-webkit-text-stroke-width:0.15px;color:#1e1e1e;">User</div><svg class="ic" style="left:22px;top:214px;" width="16" height="16" viewBox="0 0 16 16"><use href="#tbreq"/></svg><div class="t " style="left:46.00px;top:217.18px;font-size:11.6px;-webkit-text-stroke-width:0.15px;color:#1e1e1e;">Non-Functional</div><svg class="ic" style="left:22px;top:234px;" width="16" height="16" viewBox="0 0 16 16"><use href="#tbreq"/></svg><div class="t " style="left:46.00px;top:237.18px;font-size:11.6px;-webkit-text-stroke-width:0.15px;color:#1e1e1e;">Architectural</div><svg class="ic" style="left:22px;top:254px;" width="16" height="16" viewBox="0 0 16 16"><use href="#tbreq"/></svg><div class="t " style="left:46.00px;top:257.18px;font-size:11.6px;-webkit-text-stroke-width:0.15px;color:#1e1e1e;">Implementation</div><svg class="ic" style="left:22px;top:274px;" width="16" height="16" viewBox="0 0 16 16"><use href="#tbreq"/></svg><div class="t " style="left:46.00px;top:277.18px;font-size:11.6px;-webkit-text-stroke-width:0.15px;color:#1e1e1e;">Regulatory</div><svg class="ic" style="left:22px;top:294px;" width="16" height="16" viewBox="0 0 16 16"><use href="#tbreq"/></svg><div class="t " style="left:46.00px;top:297.18px;font-size:11.6px;-webkit-text-stroke-width:0.15px;color:#1e1e1e;">Security</div><svg class="ic" style="left:22px;top:314px;" width="16" height="16" viewBox="0 0 16 16"><use href="#tbdoc"/></svg><div class="t " style="left:46.00px;top:317.18px;font-size:11.6px;-webkit-text-stroke-width:0.15px;color:#1e1e1e;">Requirements Checklist</div><svg class="ic" style="left:8px;top:343px;" width="8" height="10" viewBox="0 0 8 10"><use href="#trir"/></svg><div class="t " style="left:22.00px;top:342.86px;font-size:10.8px;color:#333;font-weight:bold;">Requirements Relationships</div><svg class="ic" style="left:8px;top:363px;" width="8" height="8" viewBox="0 0 8 8"><use href="#tri"/></svg><div class="t " style="left:22.00px;top:360.86px;font-size:10.8px;color:#333;font-weight:bold;">Patterns</div><svg class="ic" style="left:22px;top:380px;" width="16" height="16" viewBox="0 0 16 16"><use href="#tbpat"/></svg><div class="t " style="left:46.00px;top:383.18px;font-size:11.6px;-webkit-text-stroke-width:0.15px;color:#1e1e1e;">Functional Requirements</div><svg class="ic" style="left:22px;top:400px;" width="16" height="16" viewBox="0 0 16 16"><use href="#tbpat"/></svg><div class="t " style="left:46.00px;top:403.18px;font-size:11.6px;-webkit-text-stroke-width:0.15px;color:#1e1e1e;">Non-Functional Requirements</div><svg class="ic" style="left:8px;top:429px;" width="8" height="10" viewBox="0 0 8 10"><use href="#trir"/></svg><div class="t " style="left:22.00px;top:428.86px;font-size:10.8px;color:#333;font-weight:bold;">Common</div><svg class="ic" style="left:8px;top:449px;" width="8" height="8" viewBox="0 0 8 8"><use href="#tri"/></svg><div class="t " style="left:22.00px;top:446.86px;font-size:10.8px;color:#333;font-weight:bold;">Artifacts</div><svg class="ic" style="left:22px;top:466px;" width="16" height="16" viewBox="0 0 16 16"><use href="#tbdoc"/></svg><div class="t " style="left:46.00px;top:469.18px;font-size:11.6px;-webkit-text-stroke-width:0.15px;color:#1e1e1e;">Artifact</div><svg class="ic" style="left:22px;top:486px;" width="16" height="16" viewBox="0 0 16 16"><use href="#tbdocred"/></svg><div class="t " style="left:46.00px;top:489.18px;font-size:11.6px;-webkit-text-stroke-width:0.15px;color:#1e1e1e;">Document</div><svg class="ic" style="left:22px;top:506px;" width="16" height="16" viewBox="0 0 16 16"><use href="#tbdoc"/></svg><div class="t " style="left:46.00px;top:509.18px;font-size:11.6px;-webkit-text-stroke-width:0.15px;color:#1e1e1e;">Checklist</div><svg class="ic" style="left:22px;top:526px;" width="16" height="16" viewBox="0 0 16 16"><use href="#tbdocred"/></svg><div class="t " style="left:46.00px;top:529.18px;font-size:11.6px;-webkit-text-stroke-width:0.15px;color:#1e1e1e;">User Story</div><svg class="ic" style="left:22px;top:546px;" width="16" height="16" viewBox="0 0 16 16"><use href="#tbdoc"/></svg><div class="t " style="left:46.00px;top:549.18px;font-size:11.6px;-webkit-text-stroke-width:0.15px;color:#1e1e1e;">Working Set</div><svg class="ic" style="left:22px;top:566px;" width="16" height="16" viewBox="0 0 16 16"><use href="#tbchart"/></svg><div class="t " style="left:46.00px;top:569.18px;font-size:11.6px;-webkit-text-stroke-width:0.15px;color:#1e1e1e;">Standard Chart</div><svg class="ic" style="left:22px;top:586px;" width="16" height="16" viewBox="0 0 16 16"><use href="#tbchart"/></svg><div class="t " style="left:46.00px;top:589.18px;font-size:11.6px;-webkit-text-stroke-width:0.15px;color:#1e1e1e;">Time Series Chart</div><svg class="ic" style="left:22px;top:606px;" width="16" height="16" viewBox="0 0 16 16"><use href="#tbchart"/></svg><div class="t " style="left:46.00px;top:609.18px;font-size:11.6px;-webkit-text-stroke-width:0.15px;color:#1e1e1e;">Model View</div><svg class="ic" style="left:22px;top:626px;" width="16" height="16" viewBox="0 0 16 16"><use href="#tbdoc"/></svg><div class="t " style="left:46.00px;top:629.18px;font-size:11.6px;-webkit-text-stroke-width:0.15px;color:#1e1e1e;">Report Specification</div><svg class="ic" style="left:22px;top:646px;" width="16" height="16" viewBox="0 0 16 16"><use href="#tbdoc"/></svg><div class="t " style="left:46.00px;top:649.18px;font-size:11.6px;-webkit-text-stroke-width:0.15px;color:#1e1e1e;">Matrix Specification</div><svg class="ic" style="left:22px;top:666px;" width="16" height="16" viewBox="0 0 16 16"><use href="#tbdoc"/></svg><div class="t " style="left:46.00px;top:669.18px;font-size:11.6px;-webkit-text-stroke-width:0.15px;color:#1e1e1e;">Executable StateMachine</div><svg class="ic" style="left:22px;top:686px;" width="16" height="16" viewBox="0 0 16 16"><use href="#tbdoc"/></svg><div class="t " style="left:46.00px;top:689.18px;font-size:11.6px;-webkit-text-stroke-width:0.15px;color:#1e1e1e;">Business Process Simulation</div><svg class="ic" style="left:22px;top:706px;" width="16" height="16" viewBox="0 0 16 16"><use href="#tbchart"/></svg><div class="t " style="left:46.00px;top:709.18px;font-size:11.6px;-webkit-text-stroke-width:0.15px;color:#1e1e1e;">BPSim Result Chart</div><svg class="ic" style="left:22px;top:726px;" width="16" height="16" viewBox="0 0 16 16"><use href="#tbchart"/></svg><div class="t " style="left:46.00px;top:729.18px;font-size:11.6px;-webkit-text-stroke-width:0.15px;color:#1e1e1e;">BPSim Custom Result Chart</div></div><div class="r" style="left:558px;top:47px;width:1px;height:677px;background:#f2f2f2"></div><div class="r" style="left:561px;top:47px;width:925px;height:677px;border:1px solid #a0a0a0;background:#fff;"></div><svg class="ic" style="left:567px;top:57px;" width="11" height="9" viewBox="0 0 11 9"><path d="M5 0.5L1 4.5l4 4M10 0.5L6 4.5l4 4" stroke="#111" stroke-width="1.3" fill="none"/></svg><div class="t " style="left:623.00px;top:56.37px;font-size:10.9px;-webkit-text-stroke-width:0.15px;color:#707070;">Specification Manager::  Package: &quot;Manage Users&quot;  [ Requirement ]</div><svg class="ic" style="left:1418px;top:57px;" width="11" height="10" viewBox="0 0 11 10"><path d="M1 5l4.5-4 4.5 4M1 9l4.5-4 4.5 4" stroke="#888" stroke-width="1" fill="none"/></svg><svg class="ic" style="left:1448px;top:58px;" width="9" height="6" viewBox="0 0 9 6"><path d="M0.5 0.5h8L4.5 5z" fill="#111"/></svg><svg class="ic" style="left:1469px;top:58px;" width="9" height="9" viewBox="0 0 9 9"><path d="M1 1l7 7M8 1l-7 7" stroke="#111" stroke-width="1.6"/></svg><div class="r" style="left:562px;top:74px;width:923px;height:1px;background:#a8a8a8"></div><svg class="ic" style="left:565px;top:78px;" width="16" height="16" viewBox="0 0 16 16"><use href="#backc"/></svg><svg class="ic" style="left:587px;top:78px;" width="16" height="16" viewBox="0 0 16 16"><use href="#fwdc"/></svg><svg class="ic" style="left:612px;top:81px;" width="8" height="10" viewBox="0 0 8 10"><use href="#navtri"/></svg><div class="t " style="left:630.00px;top:80.69px;font-size:11px;-webkit-text-stroke-width:0.15px;color:#444;">/</div><svg class="ic" style="left:646px;top:81px;" width="8" height="10" viewBox="0 0 8 10"><use href="#navtri"/></svg><div class="t " style="left:661.00px;top:81.03px;font-size:10.6px;-webkit-text-stroke-width:0.15px;color:#444;">Help Assets</div><svg class="ic" style="left:725px;top:81px;" width="8" height="10" viewBox="0 0 8 10"><use href="#navtri"/></svg><div class="t " style="left:740.00px;top:81.03px;font-size:10.6px;-webkit-text-stroke-width:0.15px;color:#444;">Diagram Legends</div><svg class="ic" style="left:831px;top:81px;" width="8" height="10" viewBox="0 0 8 10"><use href="#navtri"/></svg><div class="t " style="left:846.00px;top:81.03px;font-size:10.6px;-webkit-text-stroke-width:0.15px;color:#444;">Manage Users</div><div class="r" style="left:1149px;top:75px;width:246px;height:22px;border:1px solid #ababab;background:#fff;"></div><div class="t " style="left:1151.00px;top:81.20px;font-size:10.4px;-webkit-text-stroke-width:0.15px;color:#8a8a8a;">Find Package</div><svg class="ic" style="left:1400px;top:78px;" width="16" height="16" viewBox="0 0 16 16"><use href="#mag"/></svg><svg class="ic" style="left:1424px;top:79px;" width="16" height="15" viewBox="0 0 16 15"><path d="M1 1h3v3H1zM6 1h2v2H6zM10 1h2v2h-2zM14 1h2v2h-2zM1 6h3v3H1zM1 11h3v3H1z" fill="#222"/></svg><svg class="ic" style="left:1447px;top:84px;" width="7" height="4" viewBox="0 0 7 4"><path d="M0 0h6L3 3.5z" fill="#777"/></svg><div class="r" style="left:1458px;top:75px;width:1px;height:22px;background:#dcdcdc"></div><svg class="ic" style="left:1465px;top:79px;" width="17" height="15" viewBox="0 0 17 15"><path d="M0 1.5h16M0 5h16M0 8.5h16M0 12h16" stroke="#444" stroke-width="1.7"/></svg><div class="r" style="left:562px;top:99px;width:923px;height:1px;background:#d8d8d8"></div><div class="r" style="left:564px;top:101px;width:903px;height:31px;background:#d6e2f3;border-top:1px solid #a9a9a9;border-bottom:1px solid #a9a9a9;border-left:1px solid #a9a9a9;"></div><div class="r" style="left:918px;top:102px;width:2px;height:29px;background:#a9a9a9"></div><div class="r" style="left:1259px;top:102px;width:2px;height:29px;background:#a9a9a9"></div><div class="r" style="left:1337px;top:102px;width:2px;height:29px;background:#a9a9a9"></div><div class="r" style="left:1397px;top:102px;width:2px;height:29px;background:#a9a9a9"></div><div class="t " style="left:569.00px;top:111.20px;font-size:12.4px;-webkit-text-stroke-width:0.15px;color:#111;">Item</div><div class="t " style="left:923.50px;top:111.20px;font-size:12.4px;-webkit-text-stroke-width:0.15px;color:#111;">Notes</div><div class="t " style="left:1265.00px;top:111.20px;font-size:12.4px;-webkit-text-stroke-width:0.15px;color:#111;">Status</div><div class="t " style="left:1343.00px;top:111.20px;font-size:12.4px;-webkit-text-stroke-width:0.15px;color:#111;">Priority</div><div class="t " style="left:1403.00px;top:111.20px;font-size:12.4px;-webkit-text-stroke-width:0.15px;color:#111;width:63px;overflow:hidden;">All Indicat..</div><div class="clip" style="left:562px;top:132px;width:904px;height:549px;"><div class="t " style="left:22.00px;top:9.25px;font-size:20.5px;color:#333;font-weight:bold;">REQ011 - Manage User Accounts</div><div class="t " style="left:360.30px;top:10.45px;font-size:14.0px;-webkit-text-stroke-width:0.15px;color:#111;">The system is required to store and maintain a list of</div><div class="t " style="left:360.30px;top:28.45px;font-size:14.0px;-webkit-text-stroke-width:0.15px;color:#111;">client accounts in a persistent repository.</div><div class="t " style="left:701.40px;top:8.24px;font-size:13.3px;-webkit-text-stroke-width:0.15px;color:#444;">Validated</div><div class="t " style="left:779.00px;top:8.24px;font-size:13.3px;-webkit-text-stroke-width:0.15px;color:#444;">High</div><svg class="ic" style="left:837px;top:7px;" width="14" height="14" viewBox="0 0 14 14"><use href="#check"/></svg><svg class="ic" style="left:853px;top:6px;" width="18" height="16" viewBox="0 0 18 16"><use href="#people"/></svg><svg class="ic" style="left:873px;top:9px;" width="16" height="10" viewBox="0 0 16 10"><use href="#arrowr"/></svg><div class="t " style="left:22.40px;top:79.82px;font-size:20.3px;color:#333;font-weight:bold;">REQ016 -Add Users</div><div class="t " style="left:360.30px;top:80.35px;font-size:14.0px;-webkit-text-stroke-width:0.15px;color:#111;">It must be possible to add new users to the client</div><div class="t " style="left:360.30px;top:98.15px;font-size:14.0px;-webkit-text-stroke-width:0.15px;color:#111;">repository.</div><div class="t " style="left:701.40px;top:78.74px;font-size:13.3px;-webkit-text-stroke-width:0.15px;color:#444;">Validated</div><div class="t " style="left:779.00px;top:78.74px;font-size:13.3px;-webkit-text-stroke-width:0.15px;color:#444;">High</div><svg class="ic" style="left:836px;top:76px;" width="18" height="16" viewBox="0 0 18 16"><use href="#people"/></svg><svg class="ic" style="left:855px;top:79px;" width="16" height="10" viewBox="0 0 16 10"><use href="#arrowr"/></svg><div class="t " style="left:44.90px;top:147.55px;font-size:15.3px;color:#333;font-weight:bold;">REQ017 -Remove User</div><div class="t " style="left:360.30px;top:149.65px;font-size:14.0px;-webkit-text-stroke-width:0.15px;color:#111;">It is required that users within the repository may be</div><div class="t " style="left:360.30px;top:167.65px;font-size:14.0px;-webkit-text-stroke-width:0.15px;color:#111;">deleted if required. If the user has existing</div><div class="t " style="left:360.30px;top:185.65px;font-size:14.0px;-webkit-text-stroke-width:0.15px;color:#111;">transactions against their account, the delete is a</div><div class="t " style="left:360.30px;top:203.65px;font-size:14.0px;-webkit-text-stroke-width:0.15px;color:#111;">logical delete only.</div><div class="t " style="left:701.40px;top:148.94px;font-size:13.3px;-webkit-text-stroke-width:0.15px;color:#444;">Validated</div><div class="t " style="left:779.00px;top:148.94px;font-size:13.3px;-webkit-text-stroke-width:0.15px;color:#444;">Low</div><svg class="ic" style="left:836px;top:146px;" width="18" height="16" viewBox="0 0 18 16"><use href="#people"/></svg><svg class="ic" style="left:854px;top:146px;" width="16" height="16" viewBox="0 0 16 16"><use href="#tbdocred"/></svg><svg class="ic" style="left:873px;top:149px;" width="16" height="10" viewBox="0 0 16 10"><use href="#arrowr"/></svg><div class="t " style="left:44.90px;top:253.65px;font-size:15.3px;color:#333;font-weight:bold;">REQ018 - Report on User Account</div><div class="t " style="left:360.30px;top:255.45px;font-size:14.0px;-webkit-text-stroke-width:0.15px;color:#111;">A report is required covering all details of a user&#x27;s</div><div class="t " style="left:360.30px;top:273.45px;font-size:14.0px;-webkit-text-stroke-width:0.15px;color:#111;">account including current open transactions,</div><div class="t " style="left:360.30px;top:291.45px;font-size:14.0px;-webkit-text-stroke-width:0.15px;color:#111;">transaction history and activity.</div><div class="t " style="left:701.40px;top:254.74px;font-size:13.3px;-webkit-text-stroke-width:0.15px;color:#444;">Proposed</div><div class="t " style="left:779.00px;top:254.74px;font-size:13.3px;-webkit-text-stroke-width:0.15px;color:#444;">High</div><svg class="ic" style="left:836px;top:255px;" width="16" height="10" viewBox="0 0 16 10"><use href="#arrowr"/></svg><div class="r" style="left:2px;top:333px;width:7px;height:180px;background:linear-gradient(90deg,#9a9a9a 0,#555 30%,#666 70%,#f0f0f0 100%);"></div><div class="t " style="left:22.40px;top:343.24px;font-size:19.8px;color:#333;font-weight:bold;">REQ024 - Secure Access</div><div class="r" style="left:357px;top:336px;width:2px;height:157px;background:#8a8a8a;"></div><div class="t " style="left:360.30px;top:345.15px;font-size:14.0px;-webkit-text-stroke-width:0.15px;color:#111;">All user access is to be secure and encrypted.</div><div class="t " style="left:360.30px;top:367.65px;font-size:14.0px;-webkit-text-stroke-width:0.15px;color:#111;">Security will come from one of:</div><div class="t " style="left:360.00px;top:389.56px;font-size:18px;color:#000;">•</div><div class="t " style="left:384.40px;top:391.45px;font-size:14.0px;-webkit-text-stroke-width:0.15px;color:#0000f0;text-decoration:underline;">Password</div><div class="t " style="left:360.00px;top:407.56px;font-size:18px;color:#000;">•</div><div class="t " style="left:384.40px;top:409.45px;font-size:14.0px;-webkit-text-stroke-width:0.15px;color:#0000f0;text-decoration:underline;">Access Card</div><div class="t " style="left:360.00px;top:425.56px;font-size:18px;color:#000;">•</div><div class="t " style="left:384.40px;top:427.45px;font-size:14.0px;-webkit-text-stroke-width:0.15px;color:#f00000;">Fingerprint Scan</div><div class="t " style="left:360.30px;top:472.95px;font-size:14.0px;-webkit-text-stroke-width:0.15px;color:#111;">The password will be secure.</div><div class="t " style="left:701.40px;top:342.44px;font-size:13.3px;-webkit-text-stroke-width:0.15px;color:#444;">Proposed</div><div class="t " style="left:779.00px;top:342.44px;font-size:13.3px;-webkit-text-stroke-width:0.15px;color:#444;">High</div><svg class="ic" style="left:836px;top:340px;" width="18" height="16" viewBox="0 0 18 16"><use href="#people"/></svg><svg class="ic" style="left:855px;top:343px;" width="16" height="10" viewBox="0 0 16 10"><use href="#arrowr"/></svg><div class="t " style="left:21.50px;top:524.41px;font-size:19.6px;color:#333;font-weight:bold;">Access Card</div><div class="t " style="left:360.30px;top:524.85px;font-size:14.0px;-webkit-text-stroke-width:0.15px;color:#111;">This element was created via the &quot;create new</div><div class="t " style="left:360.30px;top:542.85px;font-size:14.0px;-webkit-text-stroke-width:0.15px;color:#111;">element from selected text&quot; context menu in REQ024</div><div class="t " style="left:701.40px;top:522.34px;font-size:13.3px;-webkit-text-stroke-width:0.15px;color:#444;">Proposed</div><div class="t " style="left:779.00px;top:522.34px;font-size:13.3px;-webkit-text-stroke-width:0.15px;color:#444;">Medium</div></div><div class="r" style="left:1466px;top:101px;width:17px;height:580px;background:#f0f0f0;"></div><div class="r" style="left:1466px;top:101px;width:17px;height:17px;background:#fff;border:1px solid #dcdcdc;"></div><svg class="ic" style="left:1470px;top:106px;" width="10" height="7" viewBox="0 0 10 7"><path d="M0.5 6h9L5 1z" fill="#666"/></svg><div class="r" style="left:1466px;top:118px;width:17px;height:222px;background:#fff;border:1px solid #dcdcdc;"></div><div class="r" style="left:1466px;top:664px;width:17px;height:17px;background:#fff;border:1px solid #dcdcdc;"></div><svg class="ic" style="left:1470px;top:669px;" width="10" height="7" viewBox="0 0 10 7"><path d="M0.5 1h9L5 6z" fill="#666"/></svg><div class="r" style="left:564px;top:681px;width:902px;height:17px;background:#f0f0f0;border-top:1px solid #e0e0e0;"></div><div class="r" style="left:564px;top:681px;width:17px;height:17px;background:#fff;border:1px solid #dcdcdc;"></div><svg class="ic" style="left:568px;top:685px;" width="7" height="10" viewBox="0 0 7 10"><path d="M6 0.5v9L1 5z" fill="#666"/></svg><div class="r" style="left:581px;top:681px;width:856px;height:17px;background:#fff;border:1px solid #dcdcdc;"></div><div class="r" style="left:1449px;top:681px;width:17px;height:17px;background:#fff;border:1px solid #dcdcdc;"></div><svg class="ic" style="left:1454px;top:685px;" width="7" height="10" viewBox="0 0 7 10"><path d="M1 0.5v9L6 5z" fill="#666"/></svg><div class="r" style="left:562px;top:699px;width:923px;height:1px;background:#cfcfcf"></div><svg class="ic" style="left:565px;top:702px;" width="16" height="16" viewBox="0 0 16 16"><use href="#eaLogo"/></svg><div class="t " style="left:583.50px;top:706.43px;font-size:11.3px;-webkit-text-stroke-width:0.15px;color:#444;">Start Page</div><svg class="ic" style="left:647px;top:702px;" width="16" height="16" viewBox="0 0 16 16"><use href="#mail"/></svg><div class="t " style="left:664.60px;top:706.43px;font-size:11.3px;-webkit-text-stroke-width:0.15px;color:#444;">Model Mail</div><div class="r" style="left:729px;top:699px;width:165px;height:23px;background:#fff;border:1px solid #ababab;"></div><svg class="ic" style="left:733px;top:702px;" width="16" height="16" viewBox="0 0 16 16"><use href="#diagred"/></svg><div class="t " style="left:751.40px;top:705.46px;font-size:10.8px;color:#2b4c8c;font-weight:bold;">Specification Manager</div><svg class="ic" style="left:879px;top:707px;" width="8" height="8" viewBox="0 0 8 8"><path d="M0.5 0.5l7 7M7.5 0.5l-7 7" stroke="#555" stroke-width="1.2"/></svg><svg class="ic" style="left:900px;top:702px;" width="16" height="16" viewBox="0 0 16 16"><use href="#findproj"/></svg><div class="t " style="left:917.60px;top:706.43px;font-size:11.3px;-webkit-text-stroke-width:0.15px;color:#444;">Find in Project</div><svg class="ic" style="left:1454px;top:706px;" width="8" height="9" viewBox="0 0 8 9"><path d="M6.5 0.5v8L1 4.5z" fill="none" stroke="#777"/></svg><svg class="ic" style="left:1471px;top:706px;" width="8" height="9" viewBox="0 0 8 9"><path d="M1.5 0.5v8L7 4.5z" fill="none" stroke="#777"/></svg><div class="r" style="left:562px;top:724px;width:1198px;height:4px;background:#efefef"></div><div class="t " style="left:1495.00px;top:56.09px;font-size:18.2px;color:#555;">Element Discussions</div><svg class="ic" style="left:1711px;top:60px;" width="10" height="10" viewBox="0 0 10 10"><use href="#pdown"/></svg><svg class="ic" style="left:1728px;top:59px;" width="10" height="12" viewBox="0 0 10 12"><use href="#pin"/></svg><svg class="ic" style="left:1745px;top:60px;" width="10" height="10" viewBox="0 0 10 10"><use href="#xcl"/></svg><div class="t " style="left:1498.00px;top:90.53px;font-size:10.6px;-webkit-text-stroke-width:0.15px;color:#333;">REQ024 - Secure Access</div><svg class="ic" style="left:1751px;top:94px;" width="7" height="4" viewBox="0 0 7 4"><path d="M0 0h6L3 3.5z" fill="#666"/></svg><div class="r" style="left:1490px;top:106px;width:271px;height:272px;border:1px solid #d0d0d0;background:#fff;"></div><div class="clip" style="left:1491px;top:107px;width:250px;height:270px;"><svg class="ic" style="left:17px;top:9px;" width="8" height="10" viewBox="0 0 8 10"><use href="#trir"/></svg><svg class="ic" style="left:33px;top:5px;" width="16" height="16" viewBox="0 0 16 16"><use href="#bubble"/></svg><div class="t " style="left:51.00px;top:8.52px;font-size:11.2px;-webkit-text-stroke-width:0.15px;color:#555;">Jane Ward</div><div class="t " style="left:115.50px;top:8.43px;font-size:11.3px;-webkit-text-stroke-width:0.15px;color:#333;">10/09/2015 12:37 PM</div><div class="t " style="left:16.00px;top:29.43px;font-size:11.3px;-webkit-text-stroke-width:0.15px;color:#666;">(1)</div><div class="t " style="left:53.30px;top:28.67px;font-size:12.2px;-webkit-text-stroke-width:0.15px;color:#1a1a1a;">Ken, why haven&#x27;t you included</div><div class="t " style="left:53.30px;top:43.67px;font-size:12.2px;-webkit-text-stroke-width:0.15px;color:#1a1a1a;">XT11 in your brief overview? Can</div><div class="t " style="left:53.30px;top:58.67px;font-size:12.2px;-webkit-text-stroke-width:0.15px;color:#1a1a1a;">we make arrangements to</div><div class="t " style="left:53.30px;top:73.67px;font-size:12.2px;-webkit-text-stroke-width:0.15px;color:#1a1a1a;">discuss this when you&#x27;re back</div><div class="t " style="left:53.30px;top:88.67px;font-size:12.2px;-webkit-text-stroke-width:0.15px;color:#1a1a1a;">from Novosibirsk?</div><svg class="ic" style="left:17px;top:124px;" width="8" height="10" viewBox="0 0 8 10"><use href="#trir"/></svg><svg class="ic" style="left:33px;top:120px;" width="16" height="16" viewBox="0 0 16 16"><use href="#bubble"/></svg><div class="t " style="left:51.00px;top:123.32px;font-size:11.2px;-webkit-text-stroke-width:0.15px;color:#555;">Jane Ward</div><div class="t " style="left:115.50px;top:123.23px;font-size:11.3px;-webkit-text-stroke-width:0.15px;color:#333;">21/09/2015 12:33 PM</div><div class="t " style="left:16.00px;top:144.23px;font-size:11.3px;-webkit-text-stroke-width:0.15px;color:#666;">(1)</div><div class="t " style="left:53.30px;top:143.47px;font-size:12.2px;-webkit-text-stroke-width:0.15px;color:#1a1a1a;">Paulene, this requires more</div><div class="t " style="left:53.30px;top:158.47px;font-size:12.2px;-webkit-text-stroke-width:0.15px;color:#1a1a1a;">detail, can you please take a look.</div><svg class="ic" style="left:17px;top:195px;" width="8" height="10" viewBox="0 0 8 10"><use href="#trir"/></svg><svg class="ic" style="left:33px;top:191px;" width="16" height="16" viewBox="0 0 16 16"><use href="#bubble"/></svg><div class="t " style="left:51.00px;top:194.02px;font-size:11.2px;-webkit-text-stroke-width:0.15px;color:#555;">Jane Ward</div><div class="t " style="left:115.50px;top:193.93px;font-size:11.3px;-webkit-text-stroke-width:0.15px;color:#333;">24/09/2015 12:29 PM</div><div class="t " style="left:16.00px;top:214.93px;font-size:11.3px;-webkit-text-stroke-width:0.15px;color:#666;">(3)</div><div class="t " style="left:53.30px;top:214.17px;font-size:12.2px;-webkit-text-stroke-width:0.15px;color:#1a1a1a;">Can we please schedule a time to</div><div class="t " style="left:53.30px;top:229.17px;font-size:12.2px;-webkit-text-stroke-width:0.15px;color:#1a1a1a;">look further into this?</div><div class="t " style="left:17.00px;top:263.93px;font-size:11.3px;-webkit-text-stroke-width:0.15px;color:#c8c8c8;">Create new Disc</div></div><div class="r" style="left:1741px;top:107px;width:18px;height:270px;background:#f0f0f0"></div><div class="r" style="left:1741px;top:107px;width:18px;height:18px;background:#fff;border:1px solid #dcdcdc;"></div><svg class="ic" style="left:1745px;top:112px;" width="10" height="7" viewBox="0 0 10 7"><path d="M0.5 6h9L5 1z" fill="#666"/></svg><div class="r" style="left:1741px;top:125px;width:18px;height:217px;background:#fff;border:1px solid #dcdcdc;"></div><div class="r" style="left:1741px;top:359px;width:18px;height:18px;background:#fff;border:1px solid #dcdcdc;"></div><svg class="ic" style="left:1745px;top:364px;" width="10" height="7" viewBox="0 0 10 7"><path d="M0.5 1h9L5 6z" fill="#666"/></svg><div class="r" style="left:1490px;top:377px;width:271px;height:6px;background:#efefef"></div><div class="r" style="left:1488px;top:385px;width:1px;height:339px;background:#dadada"></div><div class="t " style="left:1494.40px;top:390.80px;font-size:18.9px;color:#555;">Traceability</div><svg class="ic" style="left:1711px;top:394px;" width="10" height="10" viewBox="0 0 10 10"><use href="#pdown"/></svg><svg class="ic" style="left:1728px;top:393px;" width="10" height="12" viewBox="0 0 10 12"><use href="#pin"/></svg><svg class="ic" style="left:1745px;top:394px;" width="10" height="10" viewBox="0 0 10 10"><use href="#xcl"/></svg><svg class="ic" style="left:1495px;top:422px;" width="17" height="14" viewBox="0 0 17 14"><circle cx="4" cy="9" r="3" fill="none" stroke="#222" stroke-width="1.4"/><circle cx="11" cy="9" r="3" fill="none" stroke="#222" stroke-width="1.4"/><path d="M7 9h1M1 9l2-7M14 9l2-5" stroke="#222" stroke-width="1.2" fill="none"/></svg><svg class="ic" style="left:1517px;top:421px;" width="16" height="15" viewBox="0 0 16 15"><rect x="0.5" y="3.5" width="13" height="11" fill="#dbe6fb" stroke="#3a5ac8"/><path d="M3 7h8M3 9.5h8M3 12h8" stroke="#3a5ac8"/><path d="M3 5l6-4 5 2-6 4z" fill="#c8b040" stroke="#6a5a10" stroke-width="0.6"/><rect x="13" y="0" width="2" height="5" fill="#111"/></svg><svg class="ic" style="left:1539px;top:421px;" width="16" height="15" viewBox="0 0 16 15"><rect x="0.5" y="0.5" width="15" height="14" fill="#dbe6fb" stroke="#3a5ac8"/><path d="M3 3h5v4H3zM9 7h5v5H9zM4 9h4v4H4z" fill="none" stroke="#3a5ac8"/><path d="M1 12l3 2" stroke="#222"/></svg><div class="r" style="left:1562px;top:419px;width:1px;height:20px;background:#d0d0d0"></div><svg class="ic" style="left:1572px;top:421px;" width="12" height="15" viewBox="0 0 12 15"><path d="M0.5 1h2v2h-2zM0.5 6h2v2h-2zM0.5 11h2v2h-2z" fill="#445"/><path d="M5 3l2 2 4-4M5 7l5 4M10 7l-5 4M5 12l2 2 4-4" stroke="#223" fill="none" stroke-width="1"/></svg><svg class="ic" style="left:1592px;top:427px;" width="7" height="4" viewBox="0 0 7 4"><path d="M0 0h6L3 3.5z" fill="#777"/></svg><svg class="ic" style="left:1605px;top:421px;" width="16" height="16" viewBox="0 0 16 16"><use href="#help"/></svg><svg class="ic" style="left:1497px;top:446px;" width="9" height="9" viewBox="0 0 9 9"><use href="#minus"/></svg><svg class="ic" style="left:1513px;top:444px;" width="16" height="14" viewBox="0 0 16 14"><use href="#reqsmall"/></svg><div class="t " style="left:1533.00px;top:445.74px;font-size:10.7px;-webkit-text-stroke-width:0.15px;color:#333;">REQ024 - Secure Access</div><svg class="ic" style="left:1516px;top:466px;" width="9" height="9" viewBox="0 0 9 9"><use href="#minus"/></svg><svg class="ic" style="left:1531px;top:466px;" width="16" height="10" viewBox="0 0 16 10"><path d="M5 1L1 5l4 4z" fill="#fff" stroke="#3a4ab0"/><path d="M5 5h2M8.5 5h2M12 5h2" stroke="#3a4ab0" stroke-width="1.5"/></svg><div class="t " style="left:1551.00px;top:465.74px;font-size:10.7px;-webkit-text-stroke-width:0.15px;color:#333;">realized by</div><svg class="ic" style="left:1535px;top:486px;" width="9" height="9" viewBox="0 0 9 9"><use href="#plus"/></svg><svg class="ic" style="left:1550px;top:485px;" width="16" height="12" viewBox="0 0 16 12"><ellipse cx="8" cy="6" rx="7" ry="4.5" fill="#a8c8f0" stroke="#3a5ab0"/></svg><div class="t " style="left:1571.00px;top:485.74px;font-size:10.7px;-webkit-text-stroke-width:0.15px;color:#333;">Login</div><svg class="ic" style="left:1516px;top:506px;" width="9" height="9" viewBox="0 0 9 9"><use href="#minus"/></svg><svg class="ic" style="left:1531px;top:506px;" width="16" height="10" viewBox="0 0 16 10"><path d="M1 5h9" stroke="#3a4ab0" stroke-width="1.6"/><path d="M10 5l2.5-2.5L15 5l-2.5 2.5z" fill="#3a4ab0"/></svg><div class="t " style="left:1551.00px;top:505.74px;font-size:10.7px;-webkit-text-stroke-width:0.15px;color:#333;">part of</div><svg class="ic" style="left:1535px;top:526px;" width="9" height="9" viewBox="0 0 9 9"><use href="#plus"/></svg><svg class="ic" style="left:1552px;top:524px;" width="16" height="14" viewBox="0 0 16 14"><use href="#reqsmall"/></svg><div class="t " style="left:1571.00px;top:525.74px;font-size:10.7px;-webkit-text-stroke-width:0.15px;color:#333;">REQ011 - Manage User Accounts</div><svg class="ic" style="left:1516px;top:546px;" width="9" height="9" viewBox="0 0 9 9"><use href="#minus"/></svg><svg class="ic" style="left:1531px;top:546px;" width="16" height="10" viewBox="0 0 16 10"><path d="M6 5h9" stroke="#3a4ab0" stroke-width="1.6"/><path d="M1 5l2.5-2.5L6 5l-2.5 2.5z" fill="#3a4ab0"/></svg><div class="t " style="left:1551.00px;top:545.74px;font-size:10.7px;-webkit-text-stroke-width:0.15px;color:#333;">composed of</div><svg class="ic" style="left:1535px;top:566px;" width="9" height="9" viewBox="0 0 9 9"><use href="#plus"/></svg><svg class="ic" style="left:1552px;top:564px;" width="16" height="14" viewBox="0 0 16 14"><use href="#reqsmall"/></svg><div class="t " style="left:1571.00px;top:565.74px;font-size:10.7px;-webkit-text-stroke-width:0.15px;color:#333;">REQ026 - Validate User</div><div class="r" style="left:1480px;top:724px;width:280px;height:4px;background:#efefef"></div><div class="r" style="left:1762px;top:47px;width:1px;height:978px;background:#f0f0f0"></div><div class="t " style="left:1769.70px;top:57.89px;font-size:18.8px;color:#555;">Manage</div><svg class="ic" style="left:1773px;top:90px;" width="8" height="8" viewBox="0 0 8 8"><use href="#tri"/></svg><div class="t " style="left:1790.00px;top:87.97px;font-size:10.9px;color:#333;font-weight:bold;">Tasks</div><div class="t " style="left:1793.40px;top:108.93px;font-size:11.3px;-webkit-text-stroke-width:0.15px;color:#222;">Project Gantt Chart</div><div class="t " style="left:1793.40px;top:130.93px;font-size:11.3px;-webkit-text-stroke-width:0.15px;color:#222;">Package Gantt Chart</div><div class="t " style="left:1793.40px;top:152.93px;font-size:11.3px;-webkit-text-stroke-width:0.15px;color:#222;">Resource Allocation</div><div class="t " style="left:1793.40px;top:174.93px;font-size:11.3px;-webkit-text-stroke-width:0.15px;color:#222;">Project Tasks and Status</div><svg class="ic" style="left:1773px;top:198px;" width="8" height="8" viewBox="0 0 8 8"><use href="#tri"/></svg><div class="t " style="left:1790.00px;top:195.77px;font-size:10.9px;color:#333;font-weight:bold;">Status</div><div class="t " style="left:1793.40px;top:217.53px;font-size:11.3px;-webkit-text-stroke-width:0.15px;color:#222;">Recently Finished</div><div class="t " style="left:1793.40px;top:239.53px;font-size:11.3px;-webkit-text-stroke-width:0.15px;color:#222;">Tasks Starting Today</div><div class="t " style="left:1793.40px;top:261.23px;font-size:11.3px;-webkit-text-stroke-width:0.15px;color:#222;">Overdue Tasks</div><div class="t " style="left:1793.40px;top:282.93px;font-size:11.3px;-webkit-text-stroke-width:0.15px;color:#222;">Tasks Ending Today</div><div class="t " style="left:1793.40px;top:304.73px;font-size:11.3px;-webkit-text-stroke-width:0.15px;color:#222;">Active Tasks</div><div class="t " style="left:1793.40px;top:326.73px;font-size:11.3px;-webkit-text-stroke-width:0.15px;color:#222;">Kanban Diagrams</div><svg class="ic" style="left:1773px;top:350px;" width="8" height="8" viewBox="0 0 8 8"><use href="#tri"/></svg><div class="t " style="left:1790.00px;top:347.27px;font-size:10.9px;color:#333;font-weight:bold;">Tools</div><div class="t " style="left:1793.40px;top:368.83px;font-size:11.3px;-webkit-text-stroke-width:0.15px;color:#222;">Baselines</div><div class="t " style="left:1793.40px;top:390.73px;font-size:11.3px;-webkit-text-stroke-width:0.15px;color:#222;">Auditing</div><div class="t " style="left:1793.40px;top:412.73px;font-size:11.3px;-webkit-text-stroke-width:0.15px;color:#222;">Scripting</div><svg class="ic" style="left:1773px;top:434px;" width="8" height="10" viewBox="0 0 8 10"><use href="#trir"/></svg><div class="t " style="left:1790.00px;top:433.97px;font-size:10.9px;color:#333;font-weight:bold;">Package Control</div><svg class="ic" style="left:1773px;top:452px;" width="8" height="10" viewBox="0 0 8 10"><use href="#trir"/></svg><div class="t " style="left:1790.00px;top:451.77px;font-size:10.9px;color:#333;font-weight:bold;">Version Control</div><svg class="ic" style="left:1773px;top:470px;" width="8" height="10" viewBox="0 0 8 10"><use href="#trir"/></svg><div class="t " style="left:1790.00px;top:469.77px;font-size:10.9px;color:#333;font-weight:bold;">Element Tools</div><div class="r" style="left:556px;top:728px;width:1px;height:297px;background:#ececec"></div><div class="t " style="left:566.00px;top:737.90px;font-size:17.6px;color:#555;">Risks</div><svg class="ic" style="left:1097px;top:740px;" width="10" height="10" viewBox="0 0 10 10"><use href="#pdown"/></svg><svg class="ic" style="left:1114px;top:739px;" width="10" height="12" viewBox="0 0 10 12"><use href="#pin"/></svg><svg class="ic" style="left:1131px;top:740px;" width="10" height="10" viewBox="0 0 10 10"><use href="#xcl"/></svg><svg class="ic" style="left:566px;top:767px;" width="14" height="16" viewBox="0 0 14 16"><path d="M3.5 4.5h6l3 3v8h-9z" fill="#dbe6fb" stroke="#3a5ac8"/><circle cx="4" cy="4" r="3" fill="#fff8a0" stroke="#e0c020"/></svg><svg class="ic" style="left:589px;top:768px;" width="14" height="14" viewBox="0 0 14 14"><rect x="0.5" y="0.5" width="13" height="13" fill="#c8d0e8" stroke="#9aa4c8"/><rect x="3" y="1" width="8" height="5" fill="#f4f6fc"/><rect x="3" y="8" width="8" height="5" fill="#9aa4c8"/></svg><svg class="ic" style="left:611px;top:768px;" width="14" height="14" viewBox="0 0 14 14"><rect x="4.5" y="0.5" width="9" height="10" fill="#f0f0f0" stroke="#aaa"/><rect x="0.5" y="3.5" width="9" height="10" fill="#f0f0f0" stroke="#aaa"/></svg><svg class="ic" style="left:633px;top:768px;" width="14" height="14" viewBox="0 0 14 14"><path d="M1 1l12 12M13 1L1 13" stroke="#d01010" stroke-width="2"/></svg><svg class="ic" style="left:655px;top:767px;" width="14" height="16" viewBox="0 0 14 16"><text x="0" y="7" font-size="7" fill="#223" font-family="Liberation Sans">A</text><text x="0" y="15" font-size="7" fill="#223" font-family="Liberation Sans">Z</text><path d="M10 1v13M7.5 11l2.5 3 2.5-3" stroke="#1a7a2a" fill="none" stroke-width="1.2"/></svg><svg class="ic" style="left:676px;top:768px;" width="17" height="14" viewBox="0 0 17 14"><rect x="0.5" y="4.5" width="16" height="6" rx="2" fill="#5a8ad0" stroke="#223"/><rect x="4" y="1" width="9" height="4" fill="#8ab0e0"/><rect x="4" y="8" width="9" height="5" fill="#fff" stroke="#5a7ab0"/><circle cx="14" cy="7" r="1" fill="#2c2"/></svg><div class="r" style="left:699px;top:764px;width:1px;height:22px;background:#d0d0d0"></div><svg class="ic" style="left:706px;top:767px;" width="16" height="16" viewBox="0 0 16 16"><use href="#diagred"/></svg><svg class="ic" style="left:728px;top:767px;" width="16" height="15" viewBox="0 0 16 15"><rect x="0.5" y="3.5" width="13" height="11" fill="#dbe6fb" stroke="#3a5ac8"/><path d="M3 10l2 2 3-3M8 10l4 2" stroke="#3a5ac8"/><path d="M3 5l6-4 5 2-6 4z" fill="#c8b040" stroke="#6a5a10" stroke-width="0.6"/><rect x="14" y="0" width="2" height="5" fill="#111"/></svg><div class="r" style="left:751px;top:764px;width:1px;height:22px;background:#d0d0d0"></div><svg class="ic" style="left:758px;top:767px;" width="16" height="16" viewBox="0 0 16 16"><use href="#help"/></svg><div class="r" style="left:562px;top:788px;width:585px;height:215px;border:1px solid #dedede;background:#fff;"></div><div class="r" style="left:563px;top:790px;width:509px;height:23px;background:#d6e2f3;border:1px solid #a9a9a9;border-right:1px solid #a9a9a9;"></div><div class="r" style="left:1072px;top:812px;width:71px;height:1px;background:#b0b0b0"></div><div class="r" style="left:884px;top:791px;width:2px;height:21px;background:#a9a9a9"></div><div class="r" style="left:964px;top:791px;width:2px;height:21px;background:#a9a9a9"></div><div class="t " style="left:569.40px;top:796.35px;font-size:11.4px;-webkit-text-stroke-width:0.15px;color:#111;">Risk</div><div class="t " style="left:889.70px;top:796.35px;font-size:11.4px;-webkit-text-stroke-width:0.15px;color:#111;">Type</div><div class="t " style="left:970.00px;top:796.35px;font-size:11.4px;-webkit-text-stroke-width:0.15px;color:#111;">Weight</div><div class="r" style="left:563px;top:813px;width:509px;height:19px;background:#d6e2f3;border:1px dotted #222;"></div><div class="r" style="left:884px;top:814px;width:2px;height:17px;background:#fff"></div><div class="r" style="left:964px;top:814px;width:2px;height:17px;background:#fff"></div><div class="t " style="left:567.50px;top:815.48px;font-size:11.6px;-webkit-text-stroke-width:0.15px;color:#111;">Maintaining scanning software may increase budget costs</div><div class="t " style="left:888.00px;top:815.48px;font-size:11.6px;-webkit-text-stroke-width:0.15px;color:#111;">Cost Risk</div><div class="t " style="left:968.00px;top:815.48px;font-size:11.6px;-webkit-text-stroke-width:0.15px;color:#111;">2</div><div class="t " style="left:567.50px;top:835.98px;font-size:11.6px;-webkit-text-stroke-width:0.15px;color:#333;">Poor encryption could lead to security issues</div><div class="t " style="left:888.00px;top:835.98px;font-size:11.6px;-webkit-text-stroke-width:0.15px;color:#333;">Liability</div><div class="t " style="left:968.00px;top:835.98px;font-size:11.6px;-webkit-text-stroke-width:0.15px;color:#333;">3</div><svg class="ic" style="left:567px;top:1005px;" width="14" height="16" viewBox="0 0 14 16"><path d="M1.5 1.5h8l3 3v10h-11z" fill="#fff" stroke="#6a6ac8"/><path d="M12.5 4.5v10h-11" fill="none" stroke="#2a2a7a"/><path d="M7 14l5-6v6z" fill="#b8d0f4"/><rect x="3" y="3.5" width="3.5" height="3" rx="1.2" fill="none" stroke="#2a3ac8" stroke-width="1.2"/><path d="M4.7 6.5v5.5M4.7 9h1.5M4.7 10.8h1.5" stroke="#2a3ac8" stroke-width="1.2"/></svg><div class="t " style="left:583.00px;top:1009.03px;font-size:11.3px;-webkit-text-stroke-width:0.15px;color:#444;">Resource Allocation</div><div class="r" style="left:692px;top:1003px;width:54px;height:22px;background:#fff;border:1px solid #ababab;"></div><svg class="ic" style="left:697px;top:1003px;" width="14" height="16" viewBox="0 0 14 16"><path d="M1.5 1.5h8l3 3v10h-11z" fill="#fff" stroke="#6a6ac8"/><path d="M12.5 4.5v10h-11" fill="none" stroke="#2a2a7a"/><path d="M7 14l5-6v6z" fill="#b8d0f4"/><rect x="3" y="3.5" width="3.5" height="3" rx="1.2" fill="none" stroke="#2a3ac8" stroke-width="1.2"/><path d="M4.7 6.5v5.5M4.7 9h1.5M4.7 10.8h1.5" stroke="#2a3ac8" stroke-width="1.2"/></svg><div class="t " style="left:714.00px;top:1008.16px;font-size:10.8px;-webkit-text-stroke-width:0.15px;color:#2b4c8c;">Risks</div><svg class="ic" style="left:751px;top:1004px;" width="15" height="16" viewBox="0 0 15 16"><path d="M3.5 12.5l8-8" stroke="#2a3a6a" stroke-width="2"/><path d="M3.5 12.5l8-8" stroke="#a8c0e8" stroke-width="0.7" stroke-dasharray="1 1"/><path d="M10 2.5a2.8 2.8 0 0 1 4.5 2.5l-1.5-0.5-1 1 0.5 1.5a2.8 2.8 0 0 1-2.5-4.5zM5 14a2.8 2.8 0 0 1-4.5-2.5l1.5 0.5 1-1-0.5-1.5a2.8 2.8 0 0 1 2.5 4.5z" fill="#2a3a6a"/></svg><div class="t " style="left:769.00px;top:1009.03px;font-size:11.3px;-webkit-text-stroke-width:0.15px;color:#444;">Defects</div><svg class="ic" style="left:819px;top:1006px;" width="14" height="13" viewBox="0 0 14 13"><path d="M1 7l4 4 8-10" stroke="#2aa02a" stroke-width="2.2" fill="none"/></svg><div class="t " style="left:835.00px;top:1009.03px;font-size:11.3px;-webkit-text-stroke-width:0.15px;color:#444;">Testing</div><div class="r" style="left:1147px;top:728px;width:1px;height:297px;background:#ececec"></div><div class="t " style="left:1155.00px;top:736.80px;font-size:18.9px;color:#555;">Manage Inventory</div><svg class="ic" style="left:1711px;top:740px;" width="10" height="10" viewBox="0 0 10 10"><use href="#pdown"/></svg><svg class="ic" style="left:1728px;top:739px;" width="10" height="12" viewBox="0 0 10 12"><use href="#pin"/></svg><svg class="ic" style="left:1745px;top:740px;" width="10" height="10" viewBox="0 0 10 10"><use href="#xcl"/></svg><svg class="ic" style="left:1168px;top:766px;" width="16" height="16" viewBox="0 0 16 16"><use href="#diagred"/></svg><div class="t " style="left:1184.30px;top:768.77px;font-size:10.9px;-webkit-text-stroke-width:0.15px;color:#6a6a6a;">Requirements Diagram: &quot;Manage Inventory&quot;</div><div class="clip" style="left:1150px;top:786px;width:593px;height:200px;background:linear-gradient(180deg,#ffffff 0%,#f6f8fb 60%,#f7f8fb 100%);"><svg class="ic" style="left:0;top:0" width="593" height="200" viewBox="1150 786 593 200"><path d="M1316 887H1371M1346.5 817.4V954.5M1346.5 817.4H1371M1346.5 954.5H1371" stroke="#111" stroke-width="1.3" fill="none"/><path d="M1296 887l10-5.3 10 5.3-10 5.3z" fill="#fbeee0" stroke="#222" stroke-width="1.1"/><path d="M1497 817.4H1555" stroke="#111" stroke-width="1.1" stroke-dasharray="4 3" fill="none"/><path d="M1541 812l14 5.4-14 5.4" stroke="#111" stroke-width="1.1" fill="none"/><path d="M1555 957.4H1497" stroke="#111" stroke-width="1.1" stroke-dasharray="4 3" fill="none"/><path d="M1511 952l-14 5.4 14 5.4" stroke="#111" stroke-width="1.1" fill="none"/><path d="M1618.3 863.3V932.4" stroke="#111" stroke-width="1.3"/><path d="M1618.3 843l5 10-5 10-5-10z" fill="#fbeee0" stroke="#222" stroke-width="1.1"/></svg><div class="r" style="left:22.799999999999955px;top:78.79999999999995px;width:126.5px;height:51px;background:#d6d8dc;border-radius:3px;opacity:0.8"></div><div class="r" style="left:19.799999999999955px;top:75.79999999999995px;width:126.5px;height:51px;background:linear-gradient(90deg,#d8f5d4 0%,#c3efbd 40%,#9fe29a 100%);border:1.3px solid #222;border-radius:3px;"></div><div class="r" style="left:28.799999999999955px;top:75.79999999999995px;width:3.5px;height:51px;border-left:1.3px solid #222;border-right:1.3px solid #222;"></div><div class="t " style="left:37.30px;top:81.83px;font-size:10.6px;color:#111;font-weight:bold;">REQ019 - Manage</div><div class="t " style="left:37.30px;top:94.83px;font-size:10.6px;color:#111;font-weight:bold;">Inventory</div><div class="r" style="left:223.5999999999999px;top:8.799999999999955px;width:126.5px;height:51px;background:#d6d8dc;border-radius:3px;opacity:0.8"></div><div class="r" style="left:220.5999999999999px;top:5.7999999999999545px;width:126.5px;height:51px;background:linear-gradient(90deg,#d8f5d4 0%,#c3efbd 40%,#9fe29a 100%);border:1.3px solid #222;border-radius:3px;"></div><div class="r" style="left:229.5999999999999px;top:5.7999999999999545px;width:3.5px;height:51px;border-left:1.3px solid #222;border-right:1.3px solid #222;"></div><div class="t " style="left:238.10px;top:11.83px;font-size:10.6px;color:#111;font-weight:bold;">REQ021 - List</div><div class="t " style="left:238.10px;top:24.83px;font-size:10.6px;color:#111;font-weight:bold;">Stock Levels</div><div class="r" style="left:223.5999999999999px;top:78.79999999999995px;width:126.5px;height:51px;background:#d6d8dc;border-radius:3px;opacity:0.8"></div><div class="r" style="left:220.5999999999999px;top:75.79999999999995px;width:126.5px;height:51px;background:linear-gradient(90deg,#d8f5d4 0%,#c3efbd 40%,#9fe29a 100%);border:1.3px solid #222;border-radius:3px;"></div><div class="r" style="left:229.5999999999999px;top:75.79999999999995px;width:3.5px;height:51px;border-left:1.3px solid #222;border-right:1.3px solid #222;"></div><div class="t " style="left:238.10px;top:81.83px;font-size:10.6px;color:#111;font-weight:bold;">REQ022 - Order</div><div class="t " style="left:238.10px;top:94.83px;font-size:10.6px;color:#111;font-weight:bold;">Books</div><div class="r" style="left:223.5999999999999px;top:148.79999999999995px;width:126.5px;height:51px;background:#d6d8dc;border-radius:3px;opacity:0.8"></div><div class="r" style="left:220.5999999999999px;top:145.79999999999995px;width:126.5px;height:51px;background:linear-gradient(90deg,#d8f5d4 0%,#c3efbd 40%,#9fe29a 100%);border:1.3px solid #222;border-radius:3px;"></div><div class="r" style="left:229.5999999999999px;top:145.79999999999995px;width:3.5px;height:51px;border-left:1.3px solid #222;border-right:1.3px solid #222;"></div><div class="t " style="left:238.10px;top:151.83px;font-size:10.6px;color:#111;font-weight:bold;">REQ020 - Receive</div><div class="t " style="left:238.10px;top:164.83px;font-size:10.6px;color:#111;font-weight:bold;">Books</div><div class="r" style="left:407.5999999999999px;top:8.799999999999955px;width:126.5px;height:51px;background:#d6d8dc;border-radius:3px;opacity:0.8"></div><div class="r" style="left:404.5999999999999px;top:5.7999999999999545px;width:126.5px;height:51px;background:linear-gradient(90deg,#d8f5d4 0%,#c3efbd 40%,#9fe29a 100%);border:1.3px solid #222;border-radius:3px;"></div><div class="r" style="left:413.5999999999999px;top:5.7999999999999545px;width:3.5px;height:51px;border-left:1.3px solid #222;border-right:1.3px solid #222;"></div><div class="t " style="left:422.10px;top:11.83px;font-size:10.6px;color:#111;font-weight:bold;">REQ023 - Store</div><div class="t " style="left:422.10px;top:24.83px;font-size:10.6px;color:#111;font-weight:bold;">and Manage Books</div><div class="r" style="left:407.5999999999999px;top:148.79999999999995px;width:126.5px;height:51px;background:#d6d8dc;border-radius:3px;opacity:0.8"></div><div class="r" style="left:404.5999999999999px;top:145.79999999999995px;width:126.5px;height:51px;background:linear-gradient(90deg,#d8f5d4 0%,#c3efbd 40%,#9fe29a 100%);border:1.3px solid #222;border-radius:3px;"></div><div class="r" style="left:413.5999999999999px;top:145.79999999999995px;width:3.5px;height:51px;border-left:1.3px solid #222;border-right:1.3px solid #222;"></div><div class="t " style="left:422.10px;top:151.83px;font-size:10.6px;color:#111;font-weight:bold;">REQ027 - Add</div><div class="t " style="left:422.10px;top:164.83px;font-size:10.6px;color:#111;font-weight:bold;">Books</div><div class="r" style="left:19.799999999999955px;top:145.79999999999995px;width:126.5px;height:70px;background:#fffde3;border:1.3px solid #222;border-radius:3px 3px 0 0;"></div><div class="r" style="left:73.79999999999995px;top:140.79999999999995px;width:17px;height:17px;border-radius:50%;background:radial-gradient(circle at 40% 35%,#fff 0,#e8e8e8 40%,#9a9a9a 100%);border:1px solid #777;"></div><div class="t " style="left:25.30px;top:164.17px;font-size:9.6px;-webkit-text-stroke-width:0.15px;color:#111;">Requirements can be</div><div class="t " style="left:25.30px;top:176.17px;font-size:9.6px;-webkit-text-stroke-width:0.15px;color:#111;">grouped into hierarchies</div><div class="t " style="left:25.30px;top:188.17px;font-size:9.6px;-webkit-text-stroke-width:0.15px;color:#111;">effectively decomposing a</div></div><div class="r" style="left:1743px;top:786px;width:17px;height:217px;background:#f0f0f0"></div><div class="r" style="left:1743px;top:786px;width:17px;height:17px;background:#fff;border:1px solid #dcdcdc;"></div><svg class="ic" style="left:1747px;top:791px;" width="10" height="7" viewBox="0 0 10 7"><path d="M0.5 6h9L5 1z" fill="#666"/></svg><div class="r" style="left:1743px;top:805px;width:17px;height:30px;background:#fff;border:1px solid #dcdcdc;"></div><div class="r" style="left:1743px;top:969px;width:17px;height:17px;background:#fff;border:1px solid #dcdcdc;"></div><svg class="ic" style="left:1747px;top:974px;" width="10" height="7" viewBox="0 0 10 7"><path d="M0.5 1h9L5 6z" fill="#666"/></svg><div class="r" style="left:1150px;top:986px;width:593px;height:17px;background:#f0f0f0;"></div><div class="r" style="left:1150px;top:986px;width:17px;height:17px;background:#fff;border:1px solid #dcdcdc;"></div><svg class="ic" style="left:1154px;top:990px;" width="7" height="10" viewBox="0 0 7 10"><path d="M6 0.5v9L1 5z" fill="#666"/></svg><div class="r" style="left:1167px;top:986px;width:412px;height:17px;background:#fff;border:1px solid #dcdcdc;"></div><div class="r" style="left:1727px;top:986px;width:16px;height:17px;background:#fff;border:1px solid #dcdcdc;"></div><svg class="ic" style="left:1731px;top:990px;" width="7" height="10" viewBox="0 0 7 10"><path d="M1 0.5v9L6 5z" fill="#666"/></svg><div class="t " style="left:1156.20px;top:1009.03px;font-size:11.3px;-webkit-text-stroke-width:0.15px;color:#444;">Summary View</div><div class="r" style="left:1237px;top:1003px;width:121px;height:22px;background:#fff;border:1px solid #ababab;"></div><svg class="ic" style="left:1241px;top:1006px;" width="16" height="16" viewBox="0 0 16 16"><use href="#diagred"/></svg><div class="t " style="left:1259.20px;top:1007.82px;font-size:11.2px;-webkit-text-stroke-width:0.15px;color:#2b4c8c;">Manage Inventory</div><div class="r" style="left:1817.0px;top:991px;width:2px;height:2px;background:#888"></div><div class="r" style="left:1821.3px;top:991px;width:2px;height:2px;background:#888"></div><div class="r" style="left:1825.6px;top:991px;width:2px;height:2px;background:#888"></div><div class="r" style="left:1829.9px;top:991px;width:2px;height:2px;background:#888"></div><div class="r" style="left:1834.2px;top:991px;width:2px;height:2px;background:#888"></div><div class="r" style="left:1838.5px;top:991px;width:2px;height:2px;background:#888"></div><div class="r" style="left:1842.8px;top:991px;width:2px;height:2px;background:#888"></div><div class="r" style="left:1847.1px;top:991px;width:2px;height:2px;background:#888"></div><div class="r" style="left:1851.4px;top:991px;width:2px;height:2px;background:#888"></div><div class="r" style="left:1855.7px;top:991px;width:2px;height:2px;background:#888"></div><div class="r" style="left:1860.0px;top:991px;width:2px;height:2px;background:#888"></div><div class="r" style="left:1864.3px;top:991px;width:2px;height:2px;background:#888"></div><svg class="ic" style="left:1782px;top:1003px;" width="17" height="16" viewBox="0 0 17 16"><path d="M1 8L8.5 1 16 8v8h-5v-5H6v5H1z" fill="#555"/><path d="M12 1h2v4" stroke="#555" stroke-width="1.5"/></svg><svg class="ic" style="left:1806px;top:1003px;" width="17" height="16" viewBox="0 0 17 16"><rect x="5" y="1" width="11" height="9" fill="none" stroke="#555" stroke-width="1.6"/><rect x="1" y="6" width="11" height="9" fill="#fff" stroke="#555" stroke-width="1.6"/></svg><svg class="ic" style="left:1830px;top:1003px;" width="17" height="16" viewBox="0 0 17 16"><rect x="6" y="1" width="5" height="4" fill="#555"/><rect x="1" y="11" width="4" height="4" fill="#555"/><rect x="6.5" y="11" width="4" height="4" fill="#555"/><rect x="12" y="11" width="4" height="4" fill="#555"/><path d="M8.5 5v3M3 11V8h11v3M8.5 8v3" stroke="#555" stroke-width="1.2" fill="none"/></svg><svg class="ic" style="left:1854px;top:1003px;" width="17" height="16" viewBox="0 0 17 16"><path d="M1 3h14v11H1z" fill="#555"/><path d="M1 5h14" stroke="#fff"/><circle cx="12" cy="12" r="4" fill="#777" stroke="#fff"/><path d="M10 12l1.5 1.5 2.5-3" stroke="#fff" fill="none"/></svg><svg class="ic" style="left:1878px;top:1003px;" width="17" height="16" viewBox="0 0 17 16"><path d="M1 1l7 7-7 7V1zM7 1l8 7-8 7" fill="none" stroke="#555" stroke-width="1.6"/></svg><svg class="ic" style="left:1905px;top:1002px;" width="9" height="16" viewBox="0 0 9 16"><path d="M1 1l2.5 2L1 5M4.5 1L7 3 4.5 5" stroke="#444" fill="none"/><path d="M1.5 9h6L4.5 12z" fill="#555"/></svg><div class="r" style="left:0px;top:1026px;width:1920px;height:24px;background:#2b579a"></div><div class="t " style="left:3.00px;top:1032.86px;font-size:10.8px;color:#fff;">Requirement:REQ024 - Secure Access</div><div class="r" style="left:1603px;top:1037px;width:7px;height:1.5px;background:#e8e8e8"></div><div class="r" style="left:1625px;top:1037.5px;width:84px;height:1px;background:#9aaccc"></div><div class="r" style="left:1619px;top:1031px;width:5px;height:14px;background:#b8b8b8;border:1px solid #888;"></div><div class="t " style="left:1718.50px;top:1031.50px;font-size:13px;color:#e8e8e8;">+</div><div class="t " style="left:1741.50px;top:1032.52px;font-size:11.2px;color:#8ea5c9;">CAP</div><div class="t " style="left:1780.60px;top:1032.52px;font-size:11.2px;color:#fff;">NUM</div><div class="t " style="left:1826.70px;top:1032.52px;font-size:11.2px;color:#8ea5c9;">SCRL</div><div class="t " style="left:1871.50px;top:1032.52px;font-size:11.2px;color:#fff;">CLOUD</div>
</body></html>
